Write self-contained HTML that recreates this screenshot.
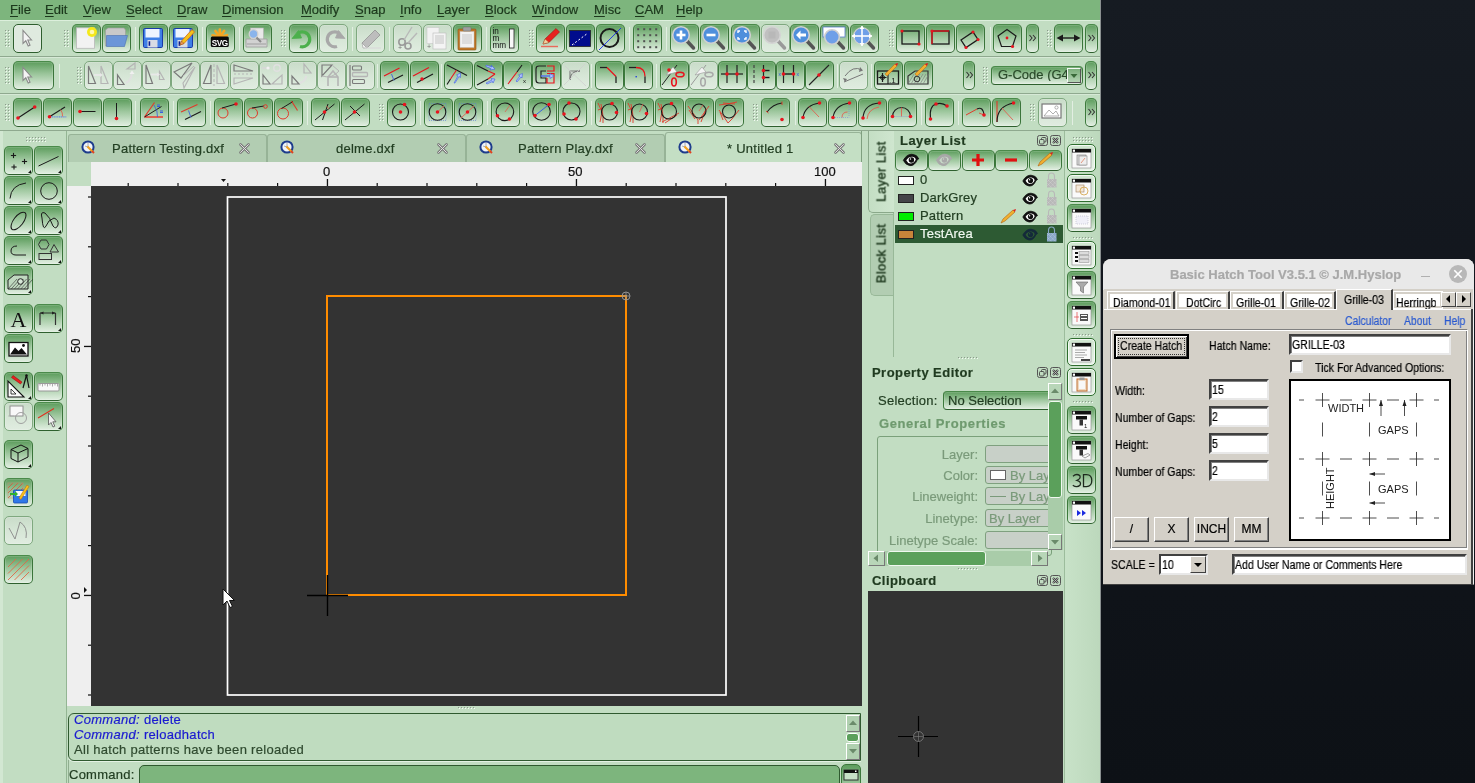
<!DOCTYPE html><html><head><meta charset="utf-8"><style>
*{margin:0;padding:0;box-sizing:border-box}
html,body{width:1475px;height:783px;overflow:hidden;background:#12161d;font-family:"Liberation Sans",sans-serif}
div,svg{position:absolute}
u{text-underline-offset:2px}
.t{white-space:nowrap;line-height:1;will-change:transform;-webkit-text-stroke:0.2px}
svg text{will-change:transform}
.b{border:1px solid #3c783c;border-color:#4a8a4a #3a743a #2e602e #3c7a3c;border-radius:5px;background:linear-gradient(#5d9d5d,#9cc69c 45%,#e2efe2);box-shadow:inset 0 0 0 1px rgba(255,255,255,.15)}
.b svg{position:absolute;left:-1px;top:-1px;overflow:hidden}
.b.d{border-color:#7fa87f;background:linear-gradient(#c9dcc9,#d6e6d6 50%,#e0ece0)}
.b.w2{border-color:#2e6e2e;background:linear-gradient(#cfe6cf,#e8f2e8);box-shadow:inset 0 0 0 1px #f4faf4}
.b.c{border-color:#2e5e2e;background:#dfeadf}
</style></head><body><div style="left:0px;top:0px;width:1100px;height:20px;background:#7db57d"></div>
<div class="t" style="left:10px;top:3px;font-size:13px;color:#1c381c"><u>F</u>ile</div>
<div class="t" style="left:45px;top:3px;font-size:13px;color:#1c381c"><u>E</u>dit</div>
<div class="t" style="left:83px;top:3px;font-size:13px;color:#1c381c"><u>V</u>iew</div>
<div class="t" style="left:126px;top:3px;font-size:13px;color:#1c381c"><u>S</u>elect</div>
<div class="t" style="left:177px;top:3px;font-size:13px;color:#1c381c"><u>D</u>raw</div>
<div class="t" style="left:222px;top:3px;font-size:13px;color:#1c381c"><u>D</u>imension</div>
<div class="t" style="left:301px;top:3px;font-size:13px;color:#1c381c"><u>M</u>odify</div>
<div class="t" style="left:355px;top:3px;font-size:13px;color:#1c381c"><u>S</u>nap</div>
<div class="t" style="left:400px;top:3px;font-size:13px;color:#1c381c"><u>I</u>nfo</div>
<div class="t" style="left:437px;top:3px;font-size:13px;color:#1c381c"><u>L</u>ayer</div>
<div class="t" style="left:485px;top:3px;font-size:13px;color:#1c381c"><u>B</u>lock</div>
<div class="t" style="left:532px;top:3px;font-size:13px;color:#1c381c"><u>W</u>indow</div>
<div class="t" style="left:594px;top:3px;font-size:13px;color:#1c381c"><u>M</u>isc</div>
<div class="t" style="left:635px;top:3px;font-size:13px;color:#1c381c"><u>C</u>AM</div>
<div class="t" style="left:676px;top:3px;font-size:13px;color:#1c381c"><u>H</u>elp</div>
<div style="left:0px;top:20px;width:1100px;height:110px;background:#c2ddc2"></div>
<div style="left:0px;top:20px;width:1100px;height:1px;background:#dcefdc"></div>
<div style="left:0px;top:56px;width:1100px;height:1px;background:#8fa98f"></div>
<div style="left:0px;top:57px;width:1100px;height:1px;background:#d6e9d6"></div>
<div style="left:0px;top:93px;width:1100px;height:1px;background:#8fa98f"></div>
<div style="left:0px;top:94px;width:1100px;height:1px;background:#d6e9d6"></div>
<div style="left:0px;top:130px;width:1100px;height:1px;background:#8fa98f"></div>
<div style="left:0px;top:131px;width:1100px;height:1px;background:#d6e9d6"></div>
<div style="left:1100px;top:0px;width:1px;height:783px;background:#9aa3a0"></div>
<div style="left:0px;top:131px;width:1100px;height:652px;background:#c2ddc2"></div>
<div style="left:66px;top:131px;width:1px;height:652px;background:#93b593"></div>
<div style="left:0px;top:131px;width:3px;height:652px;background:#d2e7d2"></div>
<div style="left:67px;top:131px;width:800px;height:31px;background:#c2ddc2"></div>
<div style="left:68px;top:134px;width:199px;height:28px;background:#b2cdb2;border:1px solid #97b397;border-bottom:none;border-radius:3px 3px 0 0"></div>
<svg style="position:absolute;left:81px;top:140px;" width="14" height="14" viewBox="0 0 14 14"><circle cx="7" cy="7" r="5.6" fill="#f0f4f8" stroke="#1e3c8c" stroke-width="2"/><path d="M4 6 L7 7 M7 3 L7 7" stroke="#999" stroke-width="0.8"/><path d="M6.5 6.5 L11.5 11.5" stroke="#f0a020" stroke-width="2.2"/><path d="M11 11 L13 13" stroke="#e04020" stroke-width="2"/></svg>
<div class="t" style="left:112px;top:142px;font-size:13px;color:#223e22;letter-spacing:0.25px">Pattern Testing.dxf</div>
<svg style="position:absolute;left:239px;top:143px;" width="11" height="11" viewBox="0 0 11 11"><path d="M1.5 1.5 L9.5 9.5 M9.5 1.5 L1.5 9.5" stroke="#7a7a7a" stroke-width="2.6" stroke-linecap="round"/><path d="M1.5 1.5 L9.5 9.5 M9.5 1.5 L1.5 9.5" stroke="#e0e0e0" stroke-width="1" stroke-linecap="round"/></svg>
<div style="left:267px;top:134px;width:199px;height:28px;background:#b2cdb2;border:1px solid #97b397;border-bottom:none;border-radius:3px 3px 0 0"></div>
<svg style="position:absolute;left:280px;top:140px;" width="14" height="14" viewBox="0 0 14 14"><circle cx="7" cy="7" r="5.6" fill="#f0f4f8" stroke="#1e3c8c" stroke-width="2"/><path d="M4 6 L7 7 M7 3 L7 7" stroke="#999" stroke-width="0.8"/><path d="M6.5 6.5 L11.5 11.5" stroke="#f0a020" stroke-width="2.2"/><path d="M11 11 L13 13" stroke="#e04020" stroke-width="2"/></svg>
<div class="t" style="left:336px;top:142px;font-size:13px;color:#223e22;letter-spacing:0.25px">delme.dxf</div>
<svg style="position:absolute;left:437px;top:143px;" width="11" height="11" viewBox="0 0 11 11"><path d="M1.5 1.5 L9.5 9.5 M9.5 1.5 L1.5 9.5" stroke="#7a7a7a" stroke-width="2.6" stroke-linecap="round"/><path d="M1.5 1.5 L9.5 9.5 M9.5 1.5 L1.5 9.5" stroke="#e0e0e0" stroke-width="1" stroke-linecap="round"/></svg>
<div style="left:466px;top:134px;width:199px;height:28px;background:#b2cdb2;border:1px solid #97b397;border-bottom:none;border-radius:3px 3px 0 0"></div>
<svg style="position:absolute;left:479px;top:140px;" width="14" height="14" viewBox="0 0 14 14"><circle cx="7" cy="7" r="5.6" fill="#f0f4f8" stroke="#1e3c8c" stroke-width="2"/><path d="M4 6 L7 7 M7 3 L7 7" stroke="#999" stroke-width="0.8"/><path d="M6.5 6.5 L11.5 11.5" stroke="#f0a020" stroke-width="2.2"/><path d="M11 11 L13 13" stroke="#e04020" stroke-width="2"/></svg>
<div class="t" style="left:518px;top:142px;font-size:13px;color:#223e22;letter-spacing:0.25px">Pattern Play.dxf</div>
<svg style="position:absolute;left:635px;top:143px;" width="11" height="11" viewBox="0 0 11 11"><path d="M1.5 1.5 L9.5 9.5 M9.5 1.5 L1.5 9.5" stroke="#7a7a7a" stroke-width="2.6" stroke-linecap="round"/><path d="M1.5 1.5 L9.5 9.5 M9.5 1.5 L1.5 9.5" stroke="#e0e0e0" stroke-width="1" stroke-linecap="round"/></svg>
<div style="left:665px;top:132px;width:197px;height:30px;background:#c4dfc4;border:1px solid #97b397;border-bottom:none;border-radius:3px 3px 0 0"></div>
<svg style="position:absolute;left:678px;top:140px;" width="14" height="14" viewBox="0 0 14 14"><circle cx="7" cy="7" r="5.6" fill="#f0f4f8" stroke="#1e3c8c" stroke-width="2"/><path d="M4 6 L7 7 M7 3 L7 7" stroke="#999" stroke-width="0.8"/><path d="M6.5 6.5 L11.5 11.5" stroke="#f0a020" stroke-width="2.2"/><path d="M11 11 L13 13" stroke="#e04020" stroke-width="2"/></svg>
<div class="t" style="left:727px;top:142px;font-size:13px;color:#223e22;letter-spacing:0.25px">* Untitled 1</div>
<svg style="position:absolute;left:834px;top:143px;" width="11" height="11" viewBox="0 0 11 11"><path d="M1.5 1.5 L9.5 9.5 M9.5 1.5 L1.5 9.5" stroke="#7a7a7a" stroke-width="2.6" stroke-linecap="round"/><path d="M1.5 1.5 L9.5 9.5 M9.5 1.5 L1.5 9.5" stroke="#e0e0e0" stroke-width="1" stroke-linecap="round"/></svg>
<div style="left:67px;top:162px;width:795px;height:24px;background:#efefef"></div>
<div style="left:67px;top:162px;width:24px;height:24px;background:#c2ddc2"></div>
<div style="left:67px;top:186px;width:24px;height:520px;background:#efefef"></div>
<svg style="position:absolute;left:67px;top:162px;" width="795" height="24" viewBox="0 0 795 24"><rect x="60.6" y="21" width="1.2" height="3" fill="#111"/><rect x="110.4" y="21" width="1.2" height="3" fill="#111"/><rect x="160.2" y="21" width="1.2" height="3" fill="#111"/><rect x="210.0" y="21" width="1.2" height="3" fill="#111"/><rect x="259.8" y="17" width="1.3" height="7" fill="#111"/><rect x="309.6" y="21" width="1.2" height="3" fill="#111"/><rect x="359.4" y="21" width="1.2" height="3" fill="#111"/><rect x="409.2" y="21" width="1.2" height="3" fill="#111"/><rect x="459.0" y="21" width="1.2" height="3" fill="#111"/><rect x="508.8" y="17" width="1.3" height="7" fill="#111"/><rect x="558.6" y="21" width="1.2" height="3" fill="#111"/><rect x="608.4" y="21" width="1.2" height="3" fill="#111"/><rect x="658.2" y="21" width="1.2" height="3" fill="#111"/><rect x="708.0" y="21" width="1.2" height="3" fill="#111"/><rect x="757.8" y="17" width="1.3" height="7" fill="#111"/><path d="M154 17 L159 17 L156.5 20 Z" fill="#111"/></svg>
<div class="t" style="left:323px;top:165px;font-size:13px;color:#111">0</div>
<div class="t" style="left:568px;top:165px;font-size:13px;color:#111">50</div>
<div class="t" style="left:814px;top:165px;font-size:13px;color:#111">100</div>
<svg style="position:absolute;left:67px;top:186px;" width="24" height="520" viewBox="0 0 24 520"><rect x="21" y="508.4" width="3" height="1.2" fill="#111"/><rect x="21" y="458.6" width="3" height="1.2" fill="#111"/><rect x="17" y="408.8" width="7" height="1.3" fill="#111"/><rect x="21" y="359.0" width="3" height="1.2" fill="#111"/><rect x="21" y="309.2" width="3" height="1.2" fill="#111"/><rect x="21" y="259.4" width="3" height="1.2" fill="#111"/><rect x="21" y="209.6" width="3" height="1.2" fill="#111"/><rect x="17" y="159.8" width="7" height="1.3" fill="#111"/><rect x="21" y="110.0" width="3" height="1.2" fill="#111"/><rect x="21" y="60.2" width="3" height="1.2" fill="#111"/><rect x="21" y="10.4" width="3" height="1.2" fill="#111"/><path d="M17 401 L17 407 L20 404 Z" fill="#111"/></svg>
<div class="t" style="left:69px;top:339px;font-size:13px;color:#111;transform:rotate(-90deg);transform-origin:7px 7px;width:14px">50</div>
<div class="t" style="left:69px;top:589px;font-size:13px;color:#111;transform:rotate(-90deg);transform-origin:7px 7px;width:14px;text-align:center">0</div>
<div style="left:91px;top:186px;width:771px;height:520px;background:#333333"></div>
<svg style="position:absolute;left:91px;top:186px;" width="771" height="520" viewBox="0 0 771 520"><rect x="136.5" y="11" width="498.5" height="498" fill="none" stroke="#ffffff" stroke-width="1.7"/><path d="M236 110 L535 110 L535 409 L236 409 Z" fill="none" stroke="#ff8c00" stroke-width="2"/><line x1="216" y1="409.5" x2="257" y2="409.5" stroke="#000" stroke-width="1.4"/><line x1="236.5" y1="389" x2="236.5" y2="430" stroke="#000" stroke-width="1.4"/><circle cx="535" cy="110" r="4" fill="none" stroke="#9a9a9a" stroke-width="0.9"/><path d="M531 110 L539 110 M535 106 L535 114" stroke="#9a9a9a" stroke-width="0.8"/><path d="M132 403 L132 419 L136 415 L139 421.5 L141.5 420.5 L138.5 414.5 L143.5 414.5 Z" fill="#fff" stroke="#111" stroke-width="1"/></svg>
<svg style="position:absolute;left:458px;top:707px;" width="19" height="4" viewBox="0 0 19 4"><rect x="1" y="1" width="1" height="1" fill="#f4faf4"/><rect x="0" y="0" width="1" height="1" fill="#8c9a8c"/><rect x="4" y="1" width="1" height="1" fill="#f4faf4"/><rect x="3" y="0" width="1" height="1" fill="#8c9a8c"/><rect x="7" y="1" width="1" height="1" fill="#f4faf4"/><rect x="6" y="0" width="1" height="1" fill="#8c9a8c"/><rect x="10" y="1" width="1" height="1" fill="#f4faf4"/><rect x="9" y="0" width="1" height="1" fill="#8c9a8c"/><rect x="13" y="1" width="1" height="1" fill="#f4faf4"/><rect x="12" y="0" width="1" height="1" fill="#8c9a8c"/><rect x="16" y="1" width="1" height="1" fill="#f4faf4"/><rect x="15" y="0" width="1" height="1" fill="#8c9a8c"/></svg>
<div style="left:68px;top:713px;width:793px;height:48px;background:#bfdcbf;border:1px solid #2f5a2f;border-radius:6px 0 0 6px;box-shadow:0 1px 0 #e4f2e4"></div>
<div class="t" style="left:74px;top:712px;font-size:13px;line-height:15px;letter-spacing:0.3px;color:#1a1ad0"><i>Command:</i> delete<br><i>Command:</i> reloadhatch<br><span style="color:#2f4a2f">All hatch patterns have been reloaded</span></div>
<div style="left:846px;top:715px;width:14px;height:17px;background:#b0d0b0;border:1px solid #fff;border-right-color:#777;border-bottom-color:#777"></div>
<svg style="position:absolute;left:846px;top:715px;" width="14" height="17" viewBox="0 0 14 17"><path d="M3 10 L11 10 L7 5.5 Z" fill="#6a8a6a"/></svg>
<div style="left:846px;top:733px;width:13px;height:9px;background:#5ba05b;border:1px solid #fff;border-radius:3px"></div>
<div style="left:846px;top:743px;width:14px;height:17px;background:#b0d0b0;border:1px solid #fff;border-right-color:#777;border-bottom-color:#777"></div>
<svg style="position:absolute;left:846px;top:743px;" width="14" height="17" viewBox="0 0 14 17"><path d="M3 6 L11 6 L7 10.5 Z" fill="#6a8a6a"/></svg>
<div style="left:68px;top:760px;width:1px;height:23px;background:#8fae8f"></div>
<div class="t" style="left:69px;top:768px;font-size:13px;color:#223e22;letter-spacing:0.25px">Command:</div>
<div style="left:139px;top:765px;width:701px;height:25px;background:#7db57d;border:1px solid #2f5a2f;border-radius:5px"></div>
<div style="left:841px;top:764px;width:20px;height:25px;border:1px solid #3c783c;border-radius:5px;background:linear-gradient(#5d9d5d,#a8cca8)"></div>
<svg style="position:absolute;left:843px;top:769px;" width="16" height="12" viewBox="0 0 16 12"><rect x="1" y="1" width="14" height="10" fill="#c8e0c8" stroke="#333" stroke-width="1"/><rect x="1" y="1" width="14" height="3" fill="#111"/><rect x="12" y="1.5" width="1.5" height="1.5" fill="#fff"/></svg>
<div style="left:862px;top:131px;width:202px;height:652px;background:#c2ddc2"></div>
<div style="left:1064px;top:131px;width:1px;height:652px;background:#9cbc9c"></div>
<svg style="position:absolute;left:5px;top:30px;" width="7" height="19" viewBox="0 0 7 19"><rect x="1" y="1" width="1" height="1" fill="#f4faf4"/><rect x="0" y="0" width="1" height="1" fill="#8c9a8c"/><rect x="4" y="1" width="1" height="1" fill="#f4faf4"/><rect x="3" y="0" width="1" height="1" fill="#8c9a8c"/><rect x="1" y="4" width="1" height="1" fill="#f4faf4"/><rect x="0" y="3" width="1" height="1" fill="#8c9a8c"/><rect x="4" y="4" width="1" height="1" fill="#f4faf4"/><rect x="3" y="3" width="1" height="1" fill="#8c9a8c"/><rect x="1" y="7" width="1" height="1" fill="#f4faf4"/><rect x="0" y="6" width="1" height="1" fill="#8c9a8c"/><rect x="4" y="7" width="1" height="1" fill="#f4faf4"/><rect x="3" y="6" width="1" height="1" fill="#8c9a8c"/><rect x="1" y="10" width="1" height="1" fill="#f4faf4"/><rect x="0" y="9" width="1" height="1" fill="#8c9a8c"/><rect x="4" y="10" width="1" height="1" fill="#f4faf4"/><rect x="3" y="9" width="1" height="1" fill="#8c9a8c"/><rect x="1" y="13" width="1" height="1" fill="#f4faf4"/><rect x="0" y="12" width="1" height="1" fill="#8c9a8c"/><rect x="4" y="13" width="1" height="1" fill="#f4faf4"/><rect x="3" y="12" width="1" height="1" fill="#8c9a8c"/><rect x="1" y="16" width="1" height="1" fill="#f4faf4"/><rect x="0" y="15" width="1" height="1" fill="#8c9a8c"/><rect x="4" y="16" width="1" height="1" fill="#f4faf4"/><rect x="3" y="15" width="1" height="1" fill="#8c9a8c"/></svg>
<div class="b c" style="left:13px;top:24px;width:29px;height:29px"><svg width="29" height="29" viewBox="0 0 29 29"><path d="M10 6.5 L10 19.5 L12.8 16.8 L15.2 22 L17 21.2 L14.8 16 L18.5 16 Z" fill="#f4f4f4" stroke="#8a8a8a" stroke-width="1.1" /></svg></div>
<svg style="position:absolute;left:64px;top:30px;" width="7" height="19" viewBox="0 0 7 19"><rect x="1" y="1" width="1" height="1" fill="#f4faf4"/><rect x="0" y="0" width="1" height="1" fill="#8c9a8c"/><rect x="4" y="1" width="1" height="1" fill="#f4faf4"/><rect x="3" y="0" width="1" height="1" fill="#8c9a8c"/><rect x="1" y="4" width="1" height="1" fill="#f4faf4"/><rect x="0" y="3" width="1" height="1" fill="#8c9a8c"/><rect x="4" y="4" width="1" height="1" fill="#f4faf4"/><rect x="3" y="3" width="1" height="1" fill="#8c9a8c"/><rect x="1" y="7" width="1" height="1" fill="#f4faf4"/><rect x="0" y="6" width="1" height="1" fill="#8c9a8c"/><rect x="4" y="7" width="1" height="1" fill="#f4faf4"/><rect x="3" y="6" width="1" height="1" fill="#8c9a8c"/><rect x="1" y="10" width="1" height="1" fill="#f4faf4"/><rect x="0" y="9" width="1" height="1" fill="#8c9a8c"/><rect x="4" y="10" width="1" height="1" fill="#f4faf4"/><rect x="3" y="9" width="1" height="1" fill="#8c9a8c"/><rect x="1" y="13" width="1" height="1" fill="#f4faf4"/><rect x="0" y="12" width="1" height="1" fill="#8c9a8c"/><rect x="4" y="13" width="1" height="1" fill="#f4faf4"/><rect x="3" y="12" width="1" height="1" fill="#8c9a8c"/><rect x="1" y="16" width="1" height="1" fill="#f4faf4"/><rect x="0" y="15" width="1" height="1" fill="#8c9a8c"/><rect x="4" y="16" width="1" height="1" fill="#f4faf4"/><rect x="3" y="15" width="1" height="1" fill="#8c9a8c"/></svg>
<div class="b g" style="left:72px;top:24px;width:29px;height:29px"><svg width="29" height="29" viewBox="0 0 29 29"><rect x="4.5" y="3.8" width="18" height="20.5" fill="#f2f2f2" stroke="#b9b9b9" stroke-width="0.8" rx="0" /><circle cx="20" cy="8" r="5" fill="#f4e81a"/><circle cx="20" cy="8" r="2.3" fill="#fff8b0"/></svg></div>
<div class="b g" style="left:102px;top:24px;width:29px;height:29px"><svg width="29" height="29" viewBox="0 0 29 29"><path d="M3.5 22 L3.5 6 L6 4 L22 4 L23.5 6 L23.5 15 Z" fill="#c9c9c9" stroke="#9a9a9a" stroke-width="0.6" /><path d="M4.5 11.5 L25.5 11.5 L22.5 22.5 L4.5 22.5 Z" fill="#6b96d8" stroke="#4a6fb0" stroke-width="0.6" /></svg></div>
<div style="left:135px;top:27px;width:1px;height:24px;background:#a9c8a9;border-right:1px solid #e2eee2"></div>
<div class="b g" style="left:139px;top:24px;width:29px;height:29px"><svg width="29" height="29" viewBox="0 0 29 29"><rect x="4.5" y="4.5" width="19" height="19" fill="#3f7fe6" stroke="#1a3aa8" stroke-width="1" rx="1.2" /><rect x="6.5" y="5" width="14" height="8.5" fill="#eef4ff" stroke="none" stroke-width="1" rx="0" /><rect x="8.5" y="16" width="10" height="7.5" fill="#d8dce4" stroke="none" stroke-width="1" rx="0" /><rect x="9.6" y="17.3" width="1.6" height="4.5" fill="#0a1a90" stroke="none" stroke-width="1" rx="0" /></svg></div>
<div class="b g" style="left:169px;top:24px;width:29px;height:29px"><svg width="29" height="29" viewBox="0 0 29 29"><rect x="4.5" y="4.5" width="19" height="19" fill="#3f7fe6" stroke="#1a3aa8" stroke-width="1" rx="1.2" /><rect x="6.5" y="5" width="14" height="8.5" fill="#eef4ff" stroke="none" stroke-width="1" rx="0" /><rect x="8.5" y="16" width="10" height="7.5" fill="#d8dce4" stroke="none" stroke-width="1" rx="0" /><rect x="9.6" y="17.3" width="1.6" height="4.5" fill="#0a1a90" stroke="none" stroke-width="1" rx="0" /><path d="M11 21 L12.5 17 L23 5.5 L25.5 8 L15 19.5 Z" fill="#f3c21a" stroke="#d86a10" stroke-width="0.8" /><path d="M11 21 L12.5 17 L15 19.5 Z" fill="#f0a060" stroke="#8a4a20" stroke-width="0.5" /></svg></div>
<div style="left:202px;top:27px;width:1px;height:24px;background:#a9c8a9;border-right:1px solid #e2eee2"></div>
<div class="b g" style="left:206px;top:24px;width:29px;height:29px"><svg width="29" height="29" viewBox="0 0 29 29"><line x1="13.8" y1="13" x2="21.066843162829837" y2="11.144470305591078" stroke="#f5a623" stroke-width="2.6" stroke-linecap="round"/><line x1="13.8" y1="13" x2="18.162623170979128" y2="6.899383714079697" stroke="#f5a623" stroke-width="2.6" stroke-linecap="round"/><line x1="13.8" y1="13" x2="13.8059724503305" y2="5.50000237801124" stroke="#f5a623" stroke-width="2.6" stroke-linecap="round"/><line x1="13.8" y1="13" x2="9.386241620584908" y2="6.936276971353074" stroke="#f5a623" stroke-width="2.6" stroke-linecap="round"/><line x1="13.8" y1="13" x2="6.517813761378072" y2="11.205630030895131" stroke="#f5a623" stroke-width="2.6" stroke-linecap="round"/><rect x="4.8" y="12.5" width="18" height="10.5" fill="#0a0a0a" stroke="none" stroke-width="1" rx="1.5" /><text x="13.8" y="21.5" font-family="Liberation Sans" font-size="8.2" font-weight="bold" fill="#ffffff" text-anchor="middle" letter-spacing="-0.4">SVG</text></svg></div>
<div style="left:239px;top:27px;width:1px;height:24px;background:#a9c8a9;border-right:1px solid #e2eee2"></div>
<div class="b g" style="left:243px;top:24px;width:29px;height:29px"><svg width="29" height="29" viewBox="0 0 29 29"><rect x="7.5" y="4" width="13" height="12" fill="#e8e8e8" stroke="#b0b0b0" stroke-width="0.6" rx="0" /><path d="M3 15 L24 15 L24 23 L3 23 Z" fill="#d2d2d2" stroke="#9c9c9c" stroke-width="0.8" /><rect x="4" y="19" width="19" height="2" fill="#b8b8b8" stroke="none" stroke-width="1" rx="0" /><circle cx="10.5" cy="10" r="4.3" fill="#8ab4ec" stroke="#d0d0d0" stroke-width="1.3"/><line x1="13.5" y1="13.5" x2="18" y2="18" stroke="#8a8a8a" stroke-width="2.2" /></svg></div>
<svg style="position:absolute;left:281px;top:30px;" width="7" height="19" viewBox="0 0 7 19"><rect x="1" y="1" width="1" height="1" fill="#f4faf4"/><rect x="0" y="0" width="1" height="1" fill="#8c9a8c"/><rect x="4" y="1" width="1" height="1" fill="#f4faf4"/><rect x="3" y="0" width="1" height="1" fill="#8c9a8c"/><rect x="1" y="4" width="1" height="1" fill="#f4faf4"/><rect x="0" y="3" width="1" height="1" fill="#8c9a8c"/><rect x="4" y="4" width="1" height="1" fill="#f4faf4"/><rect x="3" y="3" width="1" height="1" fill="#8c9a8c"/><rect x="1" y="7" width="1" height="1" fill="#f4faf4"/><rect x="0" y="6" width="1" height="1" fill="#8c9a8c"/><rect x="4" y="7" width="1" height="1" fill="#f4faf4"/><rect x="3" y="6" width="1" height="1" fill="#8c9a8c"/><rect x="1" y="10" width="1" height="1" fill="#f4faf4"/><rect x="0" y="9" width="1" height="1" fill="#8c9a8c"/><rect x="4" y="10" width="1" height="1" fill="#f4faf4"/><rect x="3" y="9" width="1" height="1" fill="#8c9a8c"/><rect x="1" y="13" width="1" height="1" fill="#f4faf4"/><rect x="0" y="12" width="1" height="1" fill="#8c9a8c"/><rect x="4" y="13" width="1" height="1" fill="#f4faf4"/><rect x="3" y="12" width="1" height="1" fill="#8c9a8c"/><rect x="1" y="16" width="1" height="1" fill="#f4faf4"/><rect x="0" y="15" width="1" height="1" fill="#8c9a8c"/><rect x="4" y="16" width="1" height="1" fill="#f4faf4"/><rect x="3" y="15" width="1" height="1" fill="#8c9a8c"/></svg>
<div class="b g" style="left:289px;top:24px;width:29px;height:29px"><svg width="29" height="29" viewBox="0 0 29 29"><path d="M8.5 9.5 A7.5 7.5 0 1 1 11 22.5" fill="none" stroke="#4cb04c" stroke-width="3.2" /><path d="M3 14.5 L9.5 6.5 L12.5 14 Z" fill="#4cb04c" stroke="#4cb04c" stroke-width="0.8" /></svg></div>
<div class="b d" style="left:319px;top:24px;width:29px;height:29px"><svg width="29" height="29" viewBox="0 0 29 29"><path d="M20.5 9.5 A7.5 7.5 0 1 0 18 22.5" fill="none" stroke="#a8a8a8" stroke-width="3.2" /><path d="M26 14.5 L19.5 6.5 L16.5 14 Z" fill="#a8a8a8" stroke="#a8a8a8" stroke-width="0.8" /></svg></div>
<div style="left:352px;top:27px;width:1px;height:24px;background:#a9c8a9;border-right:1px solid #e2eee2"></div>
<div class="b d" style="left:356px;top:24px;width:29px;height:29px"><svg width="29" height="29" viewBox="0 0 29 29"><path d="M6 19 L19 6 L24 11 L11 24 Z" fill="#bdbdbd" stroke="#8c8c8c" stroke-width="0.7" /><path d="M6 19 L11 24 L7 24 Z" fill="#f4f4f4" stroke="#9a9a9a" stroke-width="0.6" /><line x1="9" y1="24" x2="25" y2="24" stroke="#d8d8d8" stroke-width="1.2" /></svg></div>
<div style="left:389px;top:27px;width:1px;height:24px;background:#a9c8a9;border-right:1px solid #e2eee2"></div>
<div class="b d" style="left:393px;top:24px;width:29px;height:29px"><svg width="29" height="29" viewBox="0 0 29 29"><circle cx="9" cy="18" r="3.2" fill="none" stroke="#9a9a9a" stroke-width="1.6"/><circle cx="15" cy="22" r="3" fill="none" stroke="#9a9a9a" stroke-width="1.6"/><line x1="11" y1="16" x2="19" y2="3" stroke="#b8b8b8" stroke-width="1.4" /><line x1="15" y1="19" x2="24" y2="9" stroke="#b8b8b8" stroke-width="1.4" /><text x="5" y="26" font-family="Liberation Sans" font-size="7" font-weight="normal" fill="#777" text-anchor="start" >+</text></svg></div>
<div class="b d" style="left:423px;top:24px;width:29px;height:29px"><svg width="29" height="29" viewBox="0 0 29 29"><rect x="4" y="3.5" width="12" height="16" fill="#f2f2f2" stroke="#c8c8c8" stroke-width="0.6" rx="0" /><rect x="10" y="9" width="13" height="16" fill="#f4f4f4" stroke="#bbbbbb" stroke-width="0.6" rx="0" /><rect x="12" y="11" width="9" height="9" fill="#dcdcdc" stroke="none" stroke-width="1" rx="0" /><text x="4" y="25" font-family="Liberation Sans" font-size="7" font-weight="normal" fill="#777" text-anchor="start" >+</text></svg></div>
<div class="b g" style="left:453px;top:24px;width:29px;height:29px"><svg width="29" height="29" viewBox="0 0 29 29"><rect x="5" y="5" width="18" height="21" fill="#c0782a" stroke="#8a5010" stroke-width="0.6" rx="1" /><rect x="7" y="7.5" width="14" height="16" fill="#f2f2f2" stroke="#bbb" stroke-width="0.4" rx="0" /><rect x="10" y="3" width="8" height="4" fill="#a0a0a0" stroke="#707070" stroke-width="0.5" rx="1" /><rect x="9" y="10" width="10" height="10" fill="#dddddd" stroke="none" stroke-width="1" rx="0" /></svg></div>
<div style="left:486px;top:27px;width:1px;height:24px;background:#a9c8a9;border-right:1px solid #e2eee2"></div>
<div class="b g" style="left:490px;top:24px;width:29px;height:29px"><svg width="29" height="29" viewBox="0 0 29 29"><text x="2.5" y="10" font-family="Liberation Sans" font-size="8.2" font-weight="normal" fill="#111" text-anchor="start" >in</text><text x="2.5" y="17" font-family="Liberation Sans" font-size="8.2" font-weight="normal" fill="#111" text-anchor="start" >m</text><text x="2.5" y="24" font-family="Liberation Sans" font-size="8.2" font-weight="normal" fill="#111" text-anchor="start" >mm</text><rect x="19.5" y="5" width="4.5" height="19" fill="#f8f8f8" stroke="#222" stroke-width="0.8" rx="0" /></svg></div>
<svg style="position:absolute;left:529px;top:30px;" width="7" height="19" viewBox="0 0 7 19"><rect x="1" y="1" width="1" height="1" fill="#f4faf4"/><rect x="0" y="0" width="1" height="1" fill="#8c9a8c"/><rect x="4" y="1" width="1" height="1" fill="#f4faf4"/><rect x="3" y="0" width="1" height="1" fill="#8c9a8c"/><rect x="1" y="4" width="1" height="1" fill="#f4faf4"/><rect x="0" y="3" width="1" height="1" fill="#8c9a8c"/><rect x="4" y="4" width="1" height="1" fill="#f4faf4"/><rect x="3" y="3" width="1" height="1" fill="#8c9a8c"/><rect x="1" y="7" width="1" height="1" fill="#f4faf4"/><rect x="0" y="6" width="1" height="1" fill="#8c9a8c"/><rect x="4" y="7" width="1" height="1" fill="#f4faf4"/><rect x="3" y="6" width="1" height="1" fill="#8c9a8c"/><rect x="1" y="10" width="1" height="1" fill="#f4faf4"/><rect x="0" y="9" width="1" height="1" fill="#8c9a8c"/><rect x="4" y="10" width="1" height="1" fill="#f4faf4"/><rect x="3" y="9" width="1" height="1" fill="#8c9a8c"/><rect x="1" y="13" width="1" height="1" fill="#f4faf4"/><rect x="0" y="12" width="1" height="1" fill="#8c9a8c"/><rect x="4" y="13" width="1" height="1" fill="#f4faf4"/><rect x="3" y="12" width="1" height="1" fill="#8c9a8c"/><rect x="1" y="16" width="1" height="1" fill="#f4faf4"/><rect x="0" y="15" width="1" height="1" fill="#8c9a8c"/><rect x="4" y="16" width="1" height="1" fill="#f4faf4"/><rect x="3" y="15" width="1" height="1" fill="#8c9a8c"/></svg>
<div class="b g" style="left:536px;top:24px;width:29px;height:29px"><svg width="29" height="29" viewBox="0 0 29 29"><path d="M7 20 L9 15 L20 4.5 L23.5 8 L13 18.5 Z" fill="#e8231f" stroke="#a01010" stroke-width="0.6" /><path d="M7 20 L9 15 L13 18.5 Z" fill="#f0d0a0" stroke="#a06020" stroke-width="0.4" /><line x1="5" y1="22.5" x2="22" y2="22.5" stroke="#e86a5a" stroke-width="1.4" /></svg></div>
<div class="b g" style="left:566px;top:24px;width:29px;height:29px"><svg width="29" height="29" viewBox="0 0 29 29"><rect x="3.5" y="6.5" width="21" height="16" fill="#000c8c" stroke="#222" stroke-width="0.8" rx="0" /><path d="M6 21 L22 9" fill="none" stroke="#ffffff" stroke-width="1" stroke-dasharray="2 2"/><text x="6" y="21" font-family="Liberation Sans" font-size="5" font-weight="normal" fill="#fff" text-anchor="start" >..</text></svg></div>
<div class="b g" style="left:596px;top:24px;width:29px;height:29px"><svg width="29" height="29" viewBox="0 0 29 29"><circle cx="13.5" cy="14" r="9" fill="none" stroke="#1a1a1a" stroke-width="2"/><line x1="3" y1="26" x2="25" y2="4" stroke="#1a2ee8" stroke-width="0.9" /></svg></div>
<div style="left:629px;top:27px;width:1px;height:24px;background:#a9c8a9;border-right:1px solid #e2eee2"></div>
<div class="b g" style="left:633px;top:24px;width:29px;height:29px"><svg width="29" height="29" viewBox="0 0 29 29"><rect x="4.2" y="4.2" width="2" height="2" fill="#505050" stroke="none" stroke-width="1" rx="0" /><rect x="4.2" y="10.2" width="2" height="2" fill="#505050" stroke="none" stroke-width="1" rx="0" /><rect x="4.2" y="16.2" width="2" height="2" fill="#505050" stroke="none" stroke-width="1" rx="0" /><rect x="4.2" y="22.2" width="2" height="2" fill="#505050" stroke="none" stroke-width="1" rx="0" /><rect x="10.2" y="4.2" width="2" height="2" fill="#505050" stroke="none" stroke-width="1" rx="0" /><rect x="10.2" y="10.2" width="2" height="2" fill="#505050" stroke="none" stroke-width="1" rx="0" /><rect x="10.2" y="16.2" width="2" height="2" fill="#505050" stroke="none" stroke-width="1" rx="0" /><rect x="10.2" y="22.2" width="2" height="2" fill="#505050" stroke="none" stroke-width="1" rx="0" /><rect x="16.2" y="4.2" width="2" height="2" fill="#505050" stroke="none" stroke-width="1" rx="0" /><rect x="16.2" y="10.2" width="2" height="2" fill="#505050" stroke="none" stroke-width="1" rx="0" /><rect x="16.2" y="16.2" width="2" height="2" fill="#505050" stroke="none" stroke-width="1" rx="0" /><rect x="16.2" y="22.2" width="2" height="2" fill="#505050" stroke="none" stroke-width="1" rx="0" /><rect x="22.2" y="4.2" width="2" height="2" fill="#505050" stroke="none" stroke-width="1" rx="0" /><rect x="22.2" y="10.2" width="2" height="2" fill="#505050" stroke="none" stroke-width="1" rx="0" /><rect x="22.2" y="16.2" width="2" height="2" fill="#505050" stroke="none" stroke-width="1" rx="0" /><rect x="22.2" y="22.2" width="2" height="2" fill="#505050" stroke="none" stroke-width="1" rx="0" /></svg></div>
<div style="left:666px;top:27px;width:1px;height:24px;background:#a9c8a9;border-right:1px solid #e2eee2"></div>
<div class="b g" style="left:670px;top:24px;width:29px;height:29px"><svg width="29" height="29" viewBox="0 0 29 29"><line x1="17" y1="17" x2="23.5" y2="24" stroke="#555" stroke-width="3.5" stroke-linecap="round"/><circle cx="11" cy="11" r="8.3" fill="#4f8fdc" stroke="#d0d0d0" stroke-width="1.6"/><line x1="11" y1="6.5" x2="11" y2="15.5" stroke="#fff" stroke-width="2.6" /><line x1="6.5" y1="11" x2="15.5" y2="11" stroke="#fff" stroke-width="2.6" /></svg></div>
<div class="b g" style="left:700px;top:24px;width:29px;height:29px"><svg width="29" height="29" viewBox="0 0 29 29"><line x1="17" y1="17" x2="23.5" y2="24" stroke="#555" stroke-width="3.5" stroke-linecap="round"/><circle cx="11" cy="11" r="8.3" fill="#4f8fdc" stroke="#d0d0d0" stroke-width="1.6"/><line x1="6.5" y1="11" x2="15.5" y2="11" stroke="#fff" stroke-width="2.6" /></svg></div>
<div class="b g" style="left:731px;top:24px;width:29px;height:29px"><svg width="29" height="29" viewBox="0 0 29 29"><line x1="17" y1="17" x2="23.5" y2="24" stroke="#555" stroke-width="3.5" stroke-linecap="round"/><circle cx="11" cy="11" r="8.3" fill="#4f8fdc" stroke="#d0d0d0" stroke-width="1.6"/><path d="M7 9 L7 7 L9 7 M13 7 L15 7 L15 9 M15 13 L15 15 L13 15 M9 15 L7 15 L7 13" fill="none" stroke="#fff" stroke-width="1.4" /></svg></div>
<div class="b d" style="left:761px;top:24px;width:29px;height:29px"><svg width="29" height="29" viewBox="0 0 29 29"><line x1="17" y1="17" x2="23.5" y2="24" stroke="#9a9a9a" stroke-width="3.5" stroke-linecap="round"/><circle cx="11" cy="11" r="8.3" fill="#c0c0c0" stroke="#d4d4d4" stroke-width="1.6"/><rect x="7.5" y="7.5" width="7" height="7" fill="#b8b8b8" stroke="none" stroke-width="1" rx="0" /></svg></div>
<div class="b g" style="left:790px;top:24px;width:29px;height:29px"><svg width="29" height="29" viewBox="0 0 29 29"><line x1="17" y1="17" x2="23.5" y2="24" stroke="#555" stroke-width="3.5" stroke-linecap="round"/><circle cx="11" cy="11" r="8.3" fill="#4f8fdc" stroke="#d0d0d0" stroke-width="1.6"/><path d="M6 11 L10.5 6.5 L10.5 9.5 L16 9.5 L16 12.5 L10.5 12.5 L10.5 15.5 Z" fill="#fff" stroke="none" stroke-width="1.2" /></svg></div>
<div class="b g" style="left:820px;top:24px;width:29px;height:29px"><svg width="29" height="29" viewBox="0 0 29 29"><rect x="3" y="3" width="22" height="10" fill="#ffffff" stroke="#5a7ad0" stroke-width="0.8" rx="0" /><line x1="17" y1="17" x2="23.5" y2="24" stroke="#555" stroke-width="3.5" stroke-linecap="round"/><circle cx="12" cy="13" r="7.3" fill="#6f9fe8" stroke="#d0d0d0" stroke-width="1.6"/></svg></div>
<div class="b g" style="left:850px;top:24px;width:29px;height:29px"><svg width="29" height="29" viewBox="0 0 29 29"><line x1="17" y1="17" x2="23.5" y2="24" stroke="#555" stroke-width="3.5" stroke-linecap="round"/><circle cx="12" cy="12" r="8.3" fill="#6f9fe8" stroke="#d0d0d0" stroke-width="1.2"/><line x1="2" y1="12" x2="22" y2="12" stroke="#fff" stroke-width="1.6" /><line x1="12" y1="2" x2="12" y2="22" stroke="#fff" stroke-width="1.6" /><path d="M2 12 L5 9.5 L5 14.5 Z M22 12 L19 9.5 L19 14.5 Z M12 2 L9.5 5 L14.5 5 Z M12 22 L9.5 19 L14.5 19 Z" fill="#fff" stroke="none" stroke-width="1.2" /></svg></div>
<svg style="position:absolute;left:889px;top:30px;" width="7" height="19" viewBox="0 0 7 19"><rect x="1" y="1" width="1" height="1" fill="#f4faf4"/><rect x="0" y="0" width="1" height="1" fill="#8c9a8c"/><rect x="4" y="1" width="1" height="1" fill="#f4faf4"/><rect x="3" y="0" width="1" height="1" fill="#8c9a8c"/><rect x="1" y="4" width="1" height="1" fill="#f4faf4"/><rect x="0" y="3" width="1" height="1" fill="#8c9a8c"/><rect x="4" y="4" width="1" height="1" fill="#f4faf4"/><rect x="3" y="3" width="1" height="1" fill="#8c9a8c"/><rect x="1" y="7" width="1" height="1" fill="#f4faf4"/><rect x="0" y="6" width="1" height="1" fill="#8c9a8c"/><rect x="4" y="7" width="1" height="1" fill="#f4faf4"/><rect x="3" y="6" width="1" height="1" fill="#8c9a8c"/><rect x="1" y="10" width="1" height="1" fill="#f4faf4"/><rect x="0" y="9" width="1" height="1" fill="#8c9a8c"/><rect x="4" y="10" width="1" height="1" fill="#f4faf4"/><rect x="3" y="9" width="1" height="1" fill="#8c9a8c"/><rect x="1" y="13" width="1" height="1" fill="#f4faf4"/><rect x="0" y="12" width="1" height="1" fill="#8c9a8c"/><rect x="4" y="13" width="1" height="1" fill="#f4faf4"/><rect x="3" y="12" width="1" height="1" fill="#8c9a8c"/><rect x="1" y="16" width="1" height="1" fill="#f4faf4"/><rect x="0" y="15" width="1" height="1" fill="#8c9a8c"/><rect x="4" y="16" width="1" height="1" fill="#f4faf4"/><rect x="3" y="15" width="1" height="1" fill="#8c9a8c"/></svg>
<div class="b g" style="left:896px;top:24px;width:29px;height:29px"><svg width="29" height="29" viewBox="0 0 29 29"><rect x="6" y="7" width="17" height="13" fill="none" stroke="#1a1a1a" stroke-width="1.3" rx="0" /><circle cx="6" cy="7" r="1.6" fill="#e8141e"/><circle cx="23" cy="20" r="1.6" fill="#e8141e"/></svg></div>
<div class="b g" style="left:926px;top:24px;width:29px;height:29px"><svg width="29" height="29" viewBox="0 0 29 29"><rect x="6" y="7" width="17" height="13" fill="none" stroke="#1a1a1a" stroke-width="1.3" rx="0" /><line x1="6" y1="7" x2="23" y2="7" stroke="#e8141e" stroke-width="1.3" /><line x1="6" y1="7" x2="6" y2="20" stroke="#e8141e" stroke-width="1.3" /><circle cx="6" cy="7" r="1.6" fill="#e8141e"/></svg></div>
<div class="b g" style="left:956px;top:24px;width:29px;height:29px"><svg width="29" height="29" viewBox="0 0 29 29"><path d="M5 16 L17 8 L22 15.5 L10 23.5 Z" fill="none" stroke="#1a1a1a" stroke-width="1.3" /><circle cx="17" cy="8" r="1.6" fill="#e8141e"/><circle cx="10" cy="23.5" r="1.6" fill="#e8141e"/><circle cx="22" cy="15.5" r="1.6" fill="#e8141e"/></svg></div>
<div style="left:990px;top:27px;width:1px;height:24px;background:#a9c8a9;border-right:1px solid #e2eee2"></div>
<div class="b g" style="left:993px;top:24px;width:29px;height:29px"><svg width="29" height="29" viewBox="0 0 29 29"><path d="M14 5.5 L23 12 L19.5 22.5 L8.5 22.5 L5 12 Z" fill="none" stroke="#1a1a1a" stroke-width="1.2" /><circle cx="14" cy="14" r="1.4" fill="#e8141e"/><circle cx="19.5" cy="22.5" r="1.6" fill="#e8141e"/></svg></div>
<div class="b g" style="left:1026px;top:24px;width:13px;height:29px"><svg width="13" height="29" viewBox="0 0 13 29"><path d="M3.5 11 L6 14 L3.5 17 M7 11 L9.5 14 L7 17" fill="none" stroke="#333" stroke-width="1.1" /></svg></div>
<svg style="position:absolute;left:1047px;top:30px;" width="7" height="19" viewBox="0 0 7 19"><rect x="1" y="1" width="1" height="1" fill="#f4faf4"/><rect x="0" y="0" width="1" height="1" fill="#8c9a8c"/><rect x="4" y="1" width="1" height="1" fill="#f4faf4"/><rect x="3" y="0" width="1" height="1" fill="#8c9a8c"/><rect x="1" y="4" width="1" height="1" fill="#f4faf4"/><rect x="0" y="3" width="1" height="1" fill="#8c9a8c"/><rect x="4" y="4" width="1" height="1" fill="#f4faf4"/><rect x="3" y="3" width="1" height="1" fill="#8c9a8c"/><rect x="1" y="7" width="1" height="1" fill="#f4faf4"/><rect x="0" y="6" width="1" height="1" fill="#8c9a8c"/><rect x="4" y="7" width="1" height="1" fill="#f4faf4"/><rect x="3" y="6" width="1" height="1" fill="#8c9a8c"/><rect x="1" y="10" width="1" height="1" fill="#f4faf4"/><rect x="0" y="9" width="1" height="1" fill="#8c9a8c"/><rect x="4" y="10" width="1" height="1" fill="#f4faf4"/><rect x="3" y="9" width="1" height="1" fill="#8c9a8c"/><rect x="1" y="13" width="1" height="1" fill="#f4faf4"/><rect x="0" y="12" width="1" height="1" fill="#8c9a8c"/><rect x="4" y="13" width="1" height="1" fill="#f4faf4"/><rect x="3" y="12" width="1" height="1" fill="#8c9a8c"/><rect x="1" y="16" width="1" height="1" fill="#f4faf4"/><rect x="0" y="15" width="1" height="1" fill="#8c9a8c"/><rect x="4" y="16" width="1" height="1" fill="#f4faf4"/><rect x="3" y="15" width="1" height="1" fill="#8c9a8c"/></svg>
<div class="b g" style="left:1054px;top:24px;width:29px;height:29px"><svg width="29" height="29" viewBox="0 0 29 29"><line x1="6" y1="14" x2="22" y2="14" stroke="#1a1a1a" stroke-width="1.4" /><path d="M2.5 14 L9 10.5 L9 17.5 Z M26.5 14 L20 10.5 L20 17.5 Z" fill="#1a1a1a" stroke="none" stroke-width="1.2" /></svg></div>
<div class="b g" style="left:1085px;top:24px;width:13px;height:29px"><svg width="13" height="29" viewBox="0 0 13 29"><path d="M3.5 11 L6 14 L3.5 17 M7 11 L9.5 14 L7 17" fill="none" stroke="#333" stroke-width="1.1" /></svg></div>
<svg style="position:absolute;left:5px;top:67px;" width="7" height="19" viewBox="0 0 7 19"><rect x="1" y="1" width="1" height="1" fill="#f4faf4"/><rect x="0" y="0" width="1" height="1" fill="#8c9a8c"/><rect x="4" y="1" width="1" height="1" fill="#f4faf4"/><rect x="3" y="0" width="1" height="1" fill="#8c9a8c"/><rect x="1" y="4" width="1" height="1" fill="#f4faf4"/><rect x="0" y="3" width="1" height="1" fill="#8c9a8c"/><rect x="4" y="4" width="1" height="1" fill="#f4faf4"/><rect x="3" y="3" width="1" height="1" fill="#8c9a8c"/><rect x="1" y="7" width="1" height="1" fill="#f4faf4"/><rect x="0" y="6" width="1" height="1" fill="#8c9a8c"/><rect x="4" y="7" width="1" height="1" fill="#f4faf4"/><rect x="3" y="6" width="1" height="1" fill="#8c9a8c"/><rect x="1" y="10" width="1" height="1" fill="#f4faf4"/><rect x="0" y="9" width="1" height="1" fill="#8c9a8c"/><rect x="4" y="10" width="1" height="1" fill="#f4faf4"/><rect x="3" y="9" width="1" height="1" fill="#8c9a8c"/><rect x="1" y="13" width="1" height="1" fill="#f4faf4"/><rect x="0" y="12" width="1" height="1" fill="#8c9a8c"/><rect x="4" y="13" width="1" height="1" fill="#f4faf4"/><rect x="3" y="12" width="1" height="1" fill="#8c9a8c"/><rect x="1" y="16" width="1" height="1" fill="#f4faf4"/><rect x="0" y="15" width="1" height="1" fill="#8c9a8c"/><rect x="4" y="16" width="1" height="1" fill="#f4faf4"/><rect x="3" y="15" width="1" height="1" fill="#8c9a8c"/></svg>
<div class="b g" style="left:13px;top:61px;width:41px;height:29px"><svg width="41" height="29" viewBox="0 0 41 29"><path d="M10 6.5 L10 19.5 L12.8 16.8 L15.2 22 L17 21.2 L14.8 16 L18.5 16 Z" fill="#f4f4f4" stroke="#8a8a8a" stroke-width="1.1" /></svg></div>
<div style="left:59px;top:64px;width:1px;height:24px;background:#a9c8a9;border-right:1px solid #e2eee2"></div>
<svg style="position:absolute;left:77px;top:67px;" width="7" height="19" viewBox="0 0 7 19"><rect x="1" y="1" width="1" height="1" fill="#f4faf4"/><rect x="0" y="0" width="1" height="1" fill="#8c9a8c"/><rect x="4" y="1" width="1" height="1" fill="#f4faf4"/><rect x="3" y="0" width="1" height="1" fill="#8c9a8c"/><rect x="1" y="4" width="1" height="1" fill="#f4faf4"/><rect x="0" y="3" width="1" height="1" fill="#8c9a8c"/><rect x="4" y="4" width="1" height="1" fill="#f4faf4"/><rect x="3" y="3" width="1" height="1" fill="#8c9a8c"/><rect x="1" y="7" width="1" height="1" fill="#f4faf4"/><rect x="0" y="6" width="1" height="1" fill="#8c9a8c"/><rect x="4" y="7" width="1" height="1" fill="#f4faf4"/><rect x="3" y="6" width="1" height="1" fill="#8c9a8c"/><rect x="1" y="10" width="1" height="1" fill="#f4faf4"/><rect x="0" y="9" width="1" height="1" fill="#8c9a8c"/><rect x="4" y="10" width="1" height="1" fill="#f4faf4"/><rect x="3" y="9" width="1" height="1" fill="#8c9a8c"/><rect x="1" y="13" width="1" height="1" fill="#f4faf4"/><rect x="0" y="12" width="1" height="1" fill="#8c9a8c"/><rect x="4" y="13" width="1" height="1" fill="#f4faf4"/><rect x="3" y="12" width="1" height="1" fill="#8c9a8c"/><rect x="1" y="16" width="1" height="1" fill="#f4faf4"/><rect x="0" y="15" width="1" height="1" fill="#8c9a8c"/><rect x="4" y="16" width="1" height="1" fill="#f4faf4"/><rect x="3" y="15" width="1" height="1" fill="#8c9a8c"/></svg>
<div class="b d" style="left:84px;top:61px;width:29px;height:29px"><svg width="29" height="29" viewBox="0 0 29 29"><path d="M4.5 5 L4.5 22.5 L11.5 22.5 Z" fill="none" stroke="#7a7a7a" stroke-width="1.2" /><path d="M17 5 L17 22.5 L24 22.5 Z" fill="none" stroke="#b5b5b5" stroke-width="1.2" /><line x1="10" y1="14" x2="17" y2="14" stroke="#e8e8e8" stroke-width="1.8" /><path d="M19 14 L16 12 L16 16 Z" fill="#e8e8e8" stroke="none" stroke-width="1.2" /></svg></div>
<div class="b d" style="left:113px;top:61px;width:29px;height:29px"><svg width="29" height="29" viewBox="0 0 29 29"><path d="M4.5 14 L4.5 23.5 L11 23.5 Z" fill="none" stroke="#7a7a7a" stroke-width="1.2" /><path d="M14 8 L22 2 L22 8 Z" fill="none" stroke="#b5b5b5" stroke-width="1.2" /><path d="M13 22 Q18 20 19 12" fill="none" stroke="#e0e0e0" stroke-width="2" /><path d="M19 9.5 L16.5 13 L21.5 13 Z" fill="#f0f0f0" stroke="none" stroke-width="1.2" /></svg></div>
<div class="b d" style="left:142px;top:61px;width:29px;height:29px"><svg width="29" height="29" viewBox="0 0 29 29"><path d="M4 4 L4 22.5 L10.5 22.5 Z" fill="none" stroke="#7a7a7a" stroke-width="1.2" /><path d="M17.5 10.5 L17.5 18.5 L22 18.5 Z" fill="none" stroke="#b5b5b5" stroke-width="1.2" /><line x1="9" y1="13.5" x2="17" y2="13.5" stroke="#e8e8e8" stroke-width="1.8" /><path d="M18 13.5 L15 11.5 L15 15.5 Z" fill="#e8e8e8" stroke="none" stroke-width="1.2" /></svg></div>
<div class="b d" style="left:171px;top:61px;width:29px;height:29px"><svg width="29" height="29" viewBox="0 0 29 29"><path d="M3 11 L21 2 L10 17 Z" fill="none" stroke="#7a7a7a" stroke-width="1.2" /><line x1="12" y1="15" x2="23" y2="5" stroke="#b5b5b5" stroke-width="1" /><path d="M12 22 L24 6 L13 27 Z" fill="none" stroke="#b5b5b5" stroke-width="1.2" /></svg></div>
<div class="b d" style="left:200px;top:61px;width:29px;height:29px"><svg width="29" height="29" viewBox="0 0 29 29"><path d="M3.5 22.5 L11 4 L11 22.5 Z" fill="none" stroke="#7a7a7a" stroke-width="1.2" /><line x1="14" y1="3" x2="14" y2="25" stroke="#b5b5b5" stroke-width="1" stroke-dasharray="3 2"/><path d="M17 4 L17 22.5 L24.5 22.5 Z" fill="none" stroke="#b5b5b5" stroke-width="1.2" /></svg></div>
<div class="b d" style="left:230px;top:61px;width:29px;height:29px"><svg width="29" height="29" viewBox="0 0 29 29"><path d="M4 4 L4 10 L23 10 Z" fill="none" stroke="#7a7a7a" stroke-width="1.2" /><line x1="4" y1="13" x2="23" y2="13" stroke="#b5b5b5" stroke-width="1" stroke-dasharray="2 2"/><path d="M4 17 L4 23 L23 17 Z" fill="none" stroke="#b5b5b5" stroke-width="1.2" /></svg></div>
<div class="b d" style="left:259px;top:61px;width:29px;height:29px"><svg width="29" height="29" viewBox="0 0 29 29"><path d="M3 7 L11 7" fill="none" stroke="#d8d8d8" stroke-width="1.6" /><circle cx="9" cy="7" r="1.6" fill="#f0f0f0" stroke="none" stroke-width="0"/><circle cx="18" cy="7" r="3.2" fill="none" stroke="#e0e0e0" stroke-width="1.4"/><path d="M4 14 L4 23 L11 23 Z" fill="none" stroke="#7a7a7a" stroke-width="1.2" /><path d="M13 23 L23 14 L23 23 Z" fill="none" stroke="#b5b5b5" stroke-width="1.2" /></svg></div>
<div class="b d" style="left:288px;top:61px;width:29px;height:29px"><svg width="29" height="29" viewBox="0 0 29 29"><path d="M4 15 L4 23 L11 23 Z" fill="none" stroke="#7a7a7a" stroke-width="1.2" /><path d="M16 3 L16 12 L23 12 Z" fill="none" stroke="#b5b5b5" stroke-width="1.2" /><path d="M12 22 Q18 20 18 15" fill="none" stroke="#e0e0e0" stroke-width="2" /></svg></div>
<div class="b d" style="left:317px;top:61px;width:29px;height:29px"><svg width="29" height="29" viewBox="0 0 29 29"><path d="M5 4 L15 4 L5 15 Z" fill="none" stroke="#7a7a7a" stroke-width="1.2" /><path d="M5 15 Q15 18 22 10 L15 4" fill="none" stroke="#b5b5b5" stroke-width="1" /><path d="M11 25 L11 16 L16 10 L21 16 L21 25" fill="none" stroke="#b5b5b5" stroke-width="1.6" /><line x1="11" y1="16" x2="21" y2="16" stroke="#b5b5b5" stroke-width="1.6" /></svg></div>
<div class="b d" style="left:346px;top:61px;width:29px;height:29px"><svg width="29" height="29" viewBox="0 0 29 29"><line x1="4" y1="4" x2="4" y2="25" stroke="#7a7a7a" stroke-width="1.2" /><rect x="6.5" y="5" width="9" height="4" fill="none" stroke="#7a7a7a" stroke-width="1.1" rx="1" /><rect x="6.5" y="11.5" width="15" height="4" fill="none" stroke="#b5b5b5" stroke-width="1.3" rx="1" /><rect x="6.5" y="18.5" width="12" height="4" fill="none" stroke="#7a7a7a" stroke-width="1.1" rx="1" /></svg></div>
<div style="left:377px;top:64px;width:1px;height:24px;background:#a9c8a9;border-right:1px solid #e2eee2"></div>
<div class="b g" style="left:380px;top:61px;width:29px;height:29px"><svg width="29" height="29" viewBox="0 0 29 29"><line x1="4" y1="15" x2="19.5" y2="7" stroke="#e8141e" stroke-width="1.2" /><line x1="8" y1="21.5" x2="23" y2="14" stroke="#1a1a1a" stroke-width="1.2" /><line x1="11.5" y1="13" x2="14" y2="19.5" stroke="#4a6ad8" stroke-width="1" /></svg></div>
<div class="b g" style="left:410px;top:61px;width:29px;height:29px"><svg width="29" height="29" viewBox="0 0 29 29"><line x1="3" y1="15" x2="19" y2="6.5" stroke="#e8141e" stroke-width="1.2" /><line x1="7" y1="21.5" x2="23" y2="13" stroke="#1a1a1a" stroke-width="1.2" /><circle cx="12" cy="18" r="1.7" fill="#e8141e"/></svg></div>
<div style="left:441px;top:64px;width:1px;height:24px;background:#a9c8a9;border-right:1px solid #e2eee2"></div>
<div class="b g" style="left:444px;top:61px;width:29px;height:29px"><svg width="29" height="29" viewBox="0 0 29 29"><line x1="3" y1="4" x2="23" y2="14.5" stroke="#1a1a1a" stroke-width="1.1" /><line x1="3" y1="23.5" x2="6.5" y2="18" stroke="#1a1a1a" stroke-width="1.1" /><line x1="6.5" y1="18" x2="12.5" y2="9" stroke="#e8141e" stroke-width="1.1" /><path d="M10 22 L14 15 L12.5 14 L16.5 12 L16.5 16.5 L15 15.5 L11 22 Z" fill="#b0c0ff" stroke="#4060e0" stroke-width="0.6" /></svg></div>
<div class="b g" style="left:474px;top:61px;width:29px;height:29px"><svg width="29" height="29" viewBox="0 0 29 29"><line x1="3" y1="4.5" x2="14" y2="10" stroke="#1a1a1a" stroke-width="1.1" /><line x1="14" y1="10" x2="21" y2="13" stroke="#e8141e" stroke-width="1.1" /><line x1="21" y1="13" x2="14" y2="18" stroke="#e8141e" stroke-width="1.1" /><line x1="14" y1="18" x2="3" y2="24" stroke="#1a1a1a" stroke-width="1.1" /><path d="M12 4 L18 6 L17 4 L21 8 L16 9 L17 7.5 L12 5.5 Z" fill="#b0c0ff" stroke="#4060e0" stroke-width="0.6" /><path d="M12 22 L18 19 L17 17.5 L21 18 L19 22 L18.5 20.5 L13 23 Z" fill="#b0c0ff" stroke="#4060e0" stroke-width="0.6" /></svg></div>
<div class="b g" style="left:503px;top:61px;width:29px;height:29px"><svg width="29" height="29" viewBox="0 0 29 29"><line x1="5" y1="23" x2="14" y2="11" stroke="#e8141e" stroke-width="1.1" /><line x1="14" y1="11" x2="19" y2="4" stroke="#1a1a1a" stroke-width="1.1" /><path d="M13 20 L17 15 L15.5 14 L19.5 12.5 L19 17 L18 16 L14 21 Z" fill="#b0c0ff" stroke="#4060e0" stroke-width="0.6" /><text x="20" y="22" font-family="Liberation Sans" font-size="6" font-weight="normal" fill="#1a1a1a" text-anchor="start" >x</text></svg></div>
<div class="b g" style="left:532px;top:61px;width:29px;height:29px"><svg width="29" height="29" viewBox="0 0 29 29"><path d="M14 5 L7 5 Q4 5 4 8 L4 19 Q4 22 7 22 L14 22 L14 17 L9 17 L9 10 L14 10" fill="none" stroke="#222" stroke-width="1.2" /><path d="M15 5 L22 5 L22 10 L15 10 M15 12.5 L22 12.5 L22 22 L15 22 L15 17" fill="none" stroke="#e8141e" stroke-width="1.2" /><path d="M9 14.5 L18 14.5 L18 12.5 L22 15 L18 17.5 L18 15.5 L9 15.5 Z" fill="#b0c0ff" stroke="#4060e0" stroke-width="0.6" /></svg></div>
<div class="b d" style="left:561px;top:61px;width:29px;height:29px"><svg width="29" height="29" viewBox="0 0 29 29"><path d="M9 19 L9 10 L19 10" fill="none" stroke="#7a7a7a" stroke-width="1.1" /><path d="M9 19 Q9 10 19 10" fill="none" stroke="#7a7a7a" stroke-width="1.1" /><line x1="4" y1="5" x2="25" y2="25" stroke="#cfcfcf" stroke-width="0.8" /><line x1="3" y1="24" x2="24" y2="3" stroke="#cfcfcf" stroke-width="0.8" /></svg></div>
<div style="left:591px;top:64px;width:1px;height:24px;background:#a9c8a9;border-right:1px solid #e2eee2"></div>
<div class="b g" style="left:595px;top:61px;width:29px;height:29px"><svg width="29" height="29" viewBox="0 0 29 29"><line x1="5" y1="6.5" x2="12" y2="6.5" stroke="#222" stroke-width="1.3" /><line x1="12" y1="6.5" x2="21" y2="15.5" stroke="#e8141e" stroke-width="1.3" /><line x1="21" y1="15.5" x2="21" y2="22" stroke="#222" stroke-width="1.3" /></svg></div>
<div class="b g" style="left:624px;top:61px;width:29px;height:29px"><svg width="29" height="29" viewBox="0 0 29 29"><line x1="5" y1="6.5" x2="12" y2="6.5" stroke="#222" stroke-width="1.3" /><path d="M12 6.5 Q21 6.5 21 15.5" fill="none" stroke="#e8141e" stroke-width="1.3" /><line x1="21" y1="15.5" x2="21" y2="22" stroke="#222" stroke-width="1.3" /><rect x="11.5" y="15" width="1.4" height="1.4" fill="#2040e0" stroke="none" stroke-width="1" rx="0" /></svg></div>
<div style="left:656px;top:64px;width:1px;height:24px;background:#a9c8a9;border-right:1px solid #e2eee2"></div>
<div class="b g" style="left:660px;top:61px;width:29px;height:29px"><svg width="29" height="29" viewBox="0 0 29 29"><line x1="2" y1="24" x2="17" y2="4" stroke="#222" stroke-width="1" /><path d="M6 14 L17 11 L13 6 Z" fill="#f4f4f4" stroke="#999" stroke-width="0.6" /><ellipse cx="20" cy="13.5" rx="4" ry="2.3" fill="none" stroke="#e8141e" stroke-width="1.6"/><ellipse cx="14" cy="21" rx="2.3" ry="4" fill="none" stroke="#e8141e" stroke-width="1.6"/><circle cx="9" cy="9" r="1.8" fill="#e8141e"/></svg></div>
<div class="b d" style="left:689px;top:61px;width:29px;height:29px"><svg width="29" height="29" viewBox="0 0 29 29"><line x1="2" y1="24" x2="17" y2="4" stroke="#999" stroke-width="1" /><path d="M6 14 L17 11 L13 6 Z" fill="#f4f4f4" stroke="#999" stroke-width="0.6" /><ellipse cx="20" cy="13.5" rx="4" ry="2.3" fill="none" stroke="#a8a8a8" stroke-width="1.6"/><ellipse cx="14" cy="21" rx="2.3" ry="4" fill="none" stroke="#a8a8a8" stroke-width="1.6"/></svg></div>
<div class="b g" style="left:718px;top:61px;width:29px;height:29px"><svg width="29" height="29" viewBox="0 0 29 29"><line x1="9" y1="4" x2="9" y2="22" stroke="#222" stroke-width="1.2" /><line x1="19" y1="4" x2="19" y2="22" stroke="#222" stroke-width="1.2" /><line x1="3" y1="13" x2="25" y2="13" stroke="#1a1a1a" stroke-width="1.2" /><circle cx="9" cy="13" r="1.8" fill="#e8141e"/><circle cx="19" cy="13" r="1.8" fill="#e8141e"/></svg></div>
<div class="b g" style="left:747px;top:61px;width:29px;height:29px"><svg width="29" height="29" viewBox="0 0 29 29"><line x1="7" y1="4" x2="7" y2="22" stroke="#444" stroke-width="1.2" stroke-dasharray="3 2"/><line x1="16.5" y1="4" x2="16.5" y2="22" stroke="#222" stroke-width="1.2" /><line x1="16.5" y1="9.5" x2="22.5" y2="9.5" stroke="#1a1a1a" stroke-width="1.4" /><line x1="16.5" y1="16.5" x2="22.5" y2="16.5" stroke="#1a1a1a" stroke-width="1.4" /><circle cx="16.5" cy="9.5" r="1.8" fill="#e8141e"/><circle cx="16.5" cy="16.5" r="1.8" fill="#e8141e"/></svg></div>
<div class="b g" style="left:776px;top:61px;width:29px;height:29px"><svg width="29" height="29" viewBox="0 0 29 29"><line x1="7.5" y1="4" x2="7.5" y2="22" stroke="#222" stroke-width="1.2" /><line x1="17.5" y1="4" x2="17.5" y2="22" stroke="#222" stroke-width="1.2" /><line x1="7.5" y1="13" x2="17.5" y2="13" stroke="#1a1a1a" stroke-width="1.4" /><circle cx="7.5" cy="13" r="1.8" fill="#e8141e"/><circle cx="17.5" cy="13" r="1.8" fill="#e8141e"/><text x="2.5" y="15" font-family="Liberation Sans" font-size="5" font-weight="normal" fill="#3050e0" text-anchor="start" >x</text><text x="20.5" y="15" font-family="Liberation Sans" font-size="5" font-weight="normal" fill="#3050e0" text-anchor="start" >x</text></svg></div>
<div class="b g" style="left:805px;top:61px;width:29px;height:29px"><svg width="29" height="29" viewBox="0 0 29 29"><line x1="4" y1="24" x2="24" y2="4" stroke="#222" stroke-width="1.1" /><circle cx="14" cy="14" r="1.8" fill="#e8141e"/></svg></div>
<div style="left:837px;top:64px;width:1px;height:24px;background:#a9c8a9;border-right:1px solid #e2eee2"></div>
<div class="b d" style="left:839px;top:61px;width:29px;height:29px"><svg width="29" height="29" viewBox="0 0 29 29"><path d="M6 15 Q14 4 23 9" fill="none" stroke="#777" stroke-width="1" /><path d="M21 6 L24 9.5 L20 11 Z" fill="#777" stroke="none" stroke-width="1.2" /><line x1="5" y1="21" x2="24" y2="13" stroke="#777" stroke-width="1" /><path d="M4 17 L6 21 L8 18 Z" fill="#777" stroke="none" stroke-width="1.2" /></svg></div>
<div style="left:871px;top:64px;width:1px;height:24px;background:#a9c8a9;border-right:1px solid #e2eee2"></div>
<div class="b g" style="left:874px;top:61px;width:29px;height:29px"><svg width="29" height="29" viewBox="0 0 29 29"><rect x="3.5" y="10" width="21" height="13" fill="none" stroke="#1a1a1a" stroke-width="1.3" rx="0" /><line x1="14" y1="10" x2="14" y2="23" stroke="#1a1a1a" stroke-width="1.1" /><path d="M8.5 12 L8.5 21 M4.5 16.5 L12.5 16.5" fill="none" stroke="#1a1a1a" stroke-width="1.2" /><circle cx="8.5" cy="16.5" r="2" fill="none" stroke="#1a1a1a" stroke-width="1"/><text x="15" y="21.5" font-family="Liberation Sans" font-size="8" font-weight="normal" fill="#1a1a1a" text-anchor="start" >.1</text><path d="M11 13 L21 3 L23 5 L13 15 Z" fill="#f0b030" stroke="#c06010" stroke-width="0.5" /><path d="M21 3 L23 5 L24 2 Z" fill="#e8141e" stroke="none" stroke-width="1.2" /></svg></div>
<div class="b g" style="left:904px;top:61px;width:29px;height:29px"><svg width="29" height="29" viewBox="0 0 29 29"><path d="M4 23 L4 15 L11 10 L24 10 L24 23 Z" fill="none" stroke="#333" stroke-width="1.2" /><line x1="4" y1="23" x2="10" y2="13" stroke="#777" stroke-width="0.6" /><line x1="7" y1="23" x2="13" y2="13" stroke="#777" stroke-width="0.6" /><line x1="10" y1="23" x2="16" y2="13" stroke="#777" stroke-width="0.6" /><line x1="13" y1="23" x2="19" y2="13" stroke="#777" stroke-width="0.6" /><line x1="16" y1="23" x2="22" y2="13" stroke="#777" stroke-width="0.6" /><line x1="19" y1="23" x2="25" y2="13" stroke="#777" stroke-width="0.6" /><circle cx="13" cy="18" r="2.8" fill="none" stroke="#333" stroke-width="1"/><path d="M11 13 L21 3 L23 5 L13 15 Z" fill="#f0b030" stroke="#c06010" stroke-width="0.5" /><path d="M21 3 L23 5 L24 2 Z" fill="#e8141e" stroke="none" stroke-width="1.2" /></svg></div>
<div class="b g" style="left:963px;top:61px;width:12px;height:29px"><svg width="12" height="29" viewBox="0 0 12 29"><path d="M3.5 11 L6 14 L3.5 17 M7 11 L9.5 14 L7 17" fill="none" stroke="#333" stroke-width="1.1" /></svg></div>
<svg style="position:absolute;left:983px;top:67px;" width="7" height="19" viewBox="0 0 7 19"><rect x="1" y="1" width="1" height="1" fill="#f4faf4"/><rect x="0" y="0" width="1" height="1" fill="#8c9a8c"/><rect x="4" y="1" width="1" height="1" fill="#f4faf4"/><rect x="3" y="0" width="1" height="1" fill="#8c9a8c"/><rect x="1" y="4" width="1" height="1" fill="#f4faf4"/><rect x="0" y="3" width="1" height="1" fill="#8c9a8c"/><rect x="4" y="4" width="1" height="1" fill="#f4faf4"/><rect x="3" y="3" width="1" height="1" fill="#8c9a8c"/><rect x="1" y="7" width="1" height="1" fill="#f4faf4"/><rect x="0" y="6" width="1" height="1" fill="#8c9a8c"/><rect x="4" y="7" width="1" height="1" fill="#f4faf4"/><rect x="3" y="6" width="1" height="1" fill="#8c9a8c"/><rect x="1" y="10" width="1" height="1" fill="#f4faf4"/><rect x="0" y="9" width="1" height="1" fill="#8c9a8c"/><rect x="4" y="10" width="1" height="1" fill="#f4faf4"/><rect x="3" y="9" width="1" height="1" fill="#8c9a8c"/><rect x="1" y="13" width="1" height="1" fill="#f4faf4"/><rect x="0" y="12" width="1" height="1" fill="#8c9a8c"/><rect x="4" y="13" width="1" height="1" fill="#f4faf4"/><rect x="3" y="12" width="1" height="1" fill="#8c9a8c"/><rect x="1" y="16" width="1" height="1" fill="#f4faf4"/><rect x="0" y="15" width="1" height="1" fill="#8c9a8c"/><rect x="4" y="16" width="1" height="1" fill="#f4faf4"/><rect x="3" y="15" width="1" height="1" fill="#8c9a8c"/></svg>
<div class="b" style="left:991px;top:66px;width:92px;height:19px;border-radius:4px"></div>
<div class="t" style="left:998px;top:68px;font-size:13px;color:#2a4a2a;width:70px;overflow:hidden">G-Code (G4</div>
<div style="left:1067px;top:68px;width:14px;height:15px;border:1px solid #f4f8f4;border-right-color:#555;border-bottom-color:#555;background:linear-gradient(#7aae7a,#b4d4b4)"><svg width="12" height="13" style="left:0;top:0"><path d="M2.5 5 L9.5 5 L6 9 Z" fill="#3a6a3a"/></svg></div>
<div class="b g" style="left:1085px;top:61px;width:12px;height:29px"><svg width="12" height="29" viewBox="0 0 12 29"><path d="M3.5 11 L6 14 L3.5 17 M7 11 L9.5 14 L7 17" fill="none" stroke="#333" stroke-width="1.1" /></svg></div>
<svg style="position:absolute;left:5px;top:104px;" width="7" height="19" viewBox="0 0 7 19"><rect x="1" y="1" width="1" height="1" fill="#f4faf4"/><rect x="0" y="0" width="1" height="1" fill="#8c9a8c"/><rect x="4" y="1" width="1" height="1" fill="#f4faf4"/><rect x="3" y="0" width="1" height="1" fill="#8c9a8c"/><rect x="1" y="4" width="1" height="1" fill="#f4faf4"/><rect x="0" y="3" width="1" height="1" fill="#8c9a8c"/><rect x="4" y="4" width="1" height="1" fill="#f4faf4"/><rect x="3" y="3" width="1" height="1" fill="#8c9a8c"/><rect x="1" y="7" width="1" height="1" fill="#f4faf4"/><rect x="0" y="6" width="1" height="1" fill="#8c9a8c"/><rect x="4" y="7" width="1" height="1" fill="#f4faf4"/><rect x="3" y="6" width="1" height="1" fill="#8c9a8c"/><rect x="1" y="10" width="1" height="1" fill="#f4faf4"/><rect x="0" y="9" width="1" height="1" fill="#8c9a8c"/><rect x="4" y="10" width="1" height="1" fill="#f4faf4"/><rect x="3" y="9" width="1" height="1" fill="#8c9a8c"/><rect x="1" y="13" width="1" height="1" fill="#f4faf4"/><rect x="0" y="12" width="1" height="1" fill="#8c9a8c"/><rect x="4" y="13" width="1" height="1" fill="#f4faf4"/><rect x="3" y="12" width="1" height="1" fill="#8c9a8c"/><rect x="1" y="16" width="1" height="1" fill="#f4faf4"/><rect x="0" y="15" width="1" height="1" fill="#8c9a8c"/><rect x="4" y="16" width="1" height="1" fill="#f4faf4"/><rect x="3" y="15" width="1" height="1" fill="#8c9a8c"/></svg>
<div class="b g" style="left:13px;top:98px;width:29px;height:29px"><svg width="29" height="29" viewBox="0 0 29 29"><line x1="5" y1="20" x2="21.7" y2="9" stroke="#1a1a1a" stroke-width="1.1" /><circle cx="5" cy="20" r="1.8" fill="#e8141e"/><circle cx="21.7" cy="9" r="1.8" fill="#e8141e"/></svg></div>
<div class="b g" style="left:43px;top:98px;width:29px;height:29px"><svg width="29" height="29" viewBox="0 0 29 29"><line x1="6.5" y1="18.8" x2="22" y2="9" stroke="#1a1a1a" stroke-width="1.1" /><line x1="7" y1="18.8" x2="23.5" y2="18.8" stroke="#6a8ae0" stroke-width="1.2" stroke-dasharray="1.2 0.6"/><path d="M17.5 11.5 Q20 15 19.5 18.5" fill="none" stroke="#e06050" stroke-width="0.9" /><circle cx="6.5" cy="18.8" r="1.8" fill="#e8141e"/></svg></div>
<div class="b g" style="left:73px;top:98px;width:29px;height:29px"><svg width="29" height="29" viewBox="0 0 29 29"><line x1="7" y1="13.5" x2="22.5" y2="13.5" stroke="#1a1a1a" stroke-width="1" /><circle cx="7" cy="13.5" r="1.8" fill="#e8141e"/></svg></div>
<div class="b g" style="left:103px;top:98px;width:29px;height:29px"><svg width="29" height="29" viewBox="0 0 29 29"><line x1="13.5" y1="5" x2="13.5" y2="20" stroke="#1a1a1a" stroke-width="1" /><circle cx="13.5" cy="20.5" r="1.8" fill="#e8141e"/></svg></div>
<div style="left:135px;top:101px;width:1px;height:24px;background:#a9c8a9;border-right:1px solid #e2eee2"></div>
<div class="b g" style="left:140px;top:98px;width:29px;height:29px"><svg width="29" height="29" viewBox="0 0 29 29"><line x1="4.5" y1="19" x2="14.5" y2="4.5" stroke="#e03a2a" stroke-width="1.2" /><line x1="4.5" y1="19" x2="23" y2="19" stroke="#e06050" stroke-width="2" /><line x1="4.5" y1="19" x2="21.5" y2="8.5" stroke="#1a1a1a" stroke-width="1" /><path d="M14 7 Q18 13 17.5 19" fill="none" stroke="#3a5ee0" stroke-width="0.8" /><rect x="17" y="6.5" width="3" height="1" fill="#3a5ee0" stroke="none" stroke-width="1" rx="0" /><rect x="17" y="8" width="3" height="1" fill="#3a5ee0" stroke="none" stroke-width="1" rx="0" /><rect x="20" y="12.5" width="3" height="1" fill="#3a5ee0" stroke="none" stroke-width="1" rx="0" /><rect x="20" y="14" width="3" height="1" fill="#3a5ee0" stroke="none" stroke-width="1" rx="0" /></svg></div>
<div style="left:173px;top:101px;width:1px;height:24px;background:#a9c8a9;border-right:1px solid #e2eee2"></div>
<div class="b g" style="left:177px;top:98px;width:29px;height:29px"><svg width="29" height="29" viewBox="0 0 29 29"><line x1="4" y1="14" x2="20.5" y2="6.5" stroke="#e03a2a" stroke-width="1.2" /><line x1="8" y1="21.5" x2="24" y2="13.5" stroke="#1a1a1a" stroke-width="1.2" /><line x1="11.5" y1="12.5" x2="14" y2="19.5" stroke="#4a6ad8" stroke-width="1" /></svg></div>
<div style="left:210px;top:101px;width:1px;height:24px;background:#a9c8a9;border-right:1px solid #e2eee2"></div>
<div class="b g" style="left:214px;top:98px;width:29px;height:29px"><svg width="29" height="29" viewBox="0 0 29 29"><circle cx="9" cy="15" r="5" fill="none" stroke="#e03a2a" stroke-width="1"/><line x1="8" y1="10" x2="22" y2="6" stroke="#1a1a1a" stroke-width="1" /><circle cx="22" cy="6" r="1.8" fill="#e8141e"/></svg></div>
<div class="b g" style="left:244px;top:98px;width:29px;height:29px"><svg width="29" height="29" viewBox="0 0 29 29"><circle cx="8.5" cy="15" r="5" fill="none" stroke="#e03a2a" stroke-width="1"/><line x1="8" y1="10" x2="20" y2="8" stroke="#1a1a1a" stroke-width="1" /><circle cx="21.5" cy="8.5" r="1.8" fill="none" stroke="#e03a2a" stroke-width="1"/></svg></div>
<div class="b g" style="left:274px;top:98px;width:29px;height:29px"><svg width="29" height="29" viewBox="0 0 29 29"><circle cx="9" cy="15.5" r="5.5" fill="none" stroke="#e03a2a" stroke-width="1"/><line x1="7.5" y1="10.5" x2="19" y2="3.5" stroke="#1a1a1a" stroke-width="1" /><line x1="17.5" y1="3" x2="23.5" y2="12.5" stroke="#e03a2a" stroke-width="1.1" /></svg></div>
<div style="left:307px;top:101px;width:1px;height:24px;background:#a9c8a9;border-right:1px solid #e2eee2"></div>
<div class="b g" style="left:311px;top:98px;width:29px;height:29px"><svg width="29" height="29" viewBox="0 0 29 29"><line x1="4" y1="22" x2="23.5" y2="6" stroke="#1a1a1a" stroke-width="1" /><line x1="11.5" y1="22" x2="17" y2="6" stroke="#1a1a1a" stroke-width="1" /><circle cx="13.5" cy="14" r="1.8" fill="#e8141e"/><path d="M15.5 8 L18 11" fill="none" stroke="#e06050" stroke-width="0.8" /></svg></div>
<div class="b g" style="left:341px;top:98px;width:29px;height:29px"><svg width="29" height="29" viewBox="0 0 29 29"><line x1="4" y1="22" x2="23.5" y2="6" stroke="#1a1a1a" stroke-width="1" /><line x1="9" y1="8" x2="19" y2="18" stroke="#1a1a1a" stroke-width="1" /><circle cx="13.5" cy="14" r="1.8" fill="#e8141e"/></svg></div>
<svg style="position:absolute;left:379px;top:104px;" width="7" height="19" viewBox="0 0 7 19"><rect x="1" y="1" width="1" height="1" fill="#f4faf4"/><rect x="0" y="0" width="1" height="1" fill="#8c9a8c"/><rect x="4" y="1" width="1" height="1" fill="#f4faf4"/><rect x="3" y="0" width="1" height="1" fill="#8c9a8c"/><rect x="1" y="4" width="1" height="1" fill="#f4faf4"/><rect x="0" y="3" width="1" height="1" fill="#8c9a8c"/><rect x="4" y="4" width="1" height="1" fill="#f4faf4"/><rect x="3" y="3" width="1" height="1" fill="#8c9a8c"/><rect x="1" y="7" width="1" height="1" fill="#f4faf4"/><rect x="0" y="6" width="1" height="1" fill="#8c9a8c"/><rect x="4" y="7" width="1" height="1" fill="#f4faf4"/><rect x="3" y="6" width="1" height="1" fill="#8c9a8c"/><rect x="1" y="10" width="1" height="1" fill="#f4faf4"/><rect x="0" y="9" width="1" height="1" fill="#8c9a8c"/><rect x="4" y="10" width="1" height="1" fill="#f4faf4"/><rect x="3" y="9" width="1" height="1" fill="#8c9a8c"/><rect x="1" y="13" width="1" height="1" fill="#f4faf4"/><rect x="0" y="12" width="1" height="1" fill="#8c9a8c"/><rect x="4" y="13" width="1" height="1" fill="#f4faf4"/><rect x="3" y="12" width="1" height="1" fill="#8c9a8c"/><rect x="1" y="16" width="1" height="1" fill="#f4faf4"/><rect x="0" y="15" width="1" height="1" fill="#8c9a8c"/><rect x="4" y="16" width="1" height="1" fill="#f4faf4"/><rect x="3" y="15" width="1" height="1" fill="#8c9a8c"/></svg>
<div class="b g" style="left:387px;top:98px;width:29px;height:29px"><svg width="29" height="29" viewBox="0 0 29 29"><circle cx="13.5" cy="14" r="8" fill="none" stroke="#1a1a1a" stroke-width="1.1"/><circle cx="13.5" cy="14" r="1.8" fill="#e8141e"/><circle cx="17.5" cy="6.5" r="1.8" fill="#e8141e"/></svg></div>
<div style="left:420px;top:101px;width:1px;height:24px;background:#a9c8a9;border-right:1px solid #e2eee2"></div>
<div class="b g" style="left:424px;top:98px;width:29px;height:29px"><svg width="29" height="29" viewBox="0 0 29 29"><rect x="5" y="5.5" width="17" height="17" fill="none" stroke="#5a78d8" stroke-width="0.6" rx="0" stroke-dasharray="1 1"/><circle cx="13.5" cy="14" r="8.3" fill="none" stroke="#1a1a1a" stroke-width="1.1"/><line x1="13.5" y1="14" x2="20" y2="8" stroke="#e06050" stroke-width="0.9" /><circle cx="13.5" cy="14" r="1.8" fill="#e8141e"/></svg></div>
<div class="b g" style="left:454px;top:98px;width:29px;height:29px"><svg width="29" height="29" viewBox="0 0 29 29"><rect x="5" y="5.5" width="17" height="17" fill="none" stroke="#5a78d8" stroke-width="0.6" rx="0" stroke-dasharray="1 1"/><circle cx="13.5" cy="14" r="8.3" fill="none" stroke="#1a1a1a" stroke-width="1.1"/><line x1="7" y1="20" x2="20" y2="8" stroke="#e06050" stroke-width="0.9" /><circle cx="13.5" cy="14" r="1.8" fill="#e8141e"/></svg></div>
<div style="left:487px;top:101px;width:1px;height:24px;background:#a9c8a9;border-right:1px solid #e2eee2"></div>
<div class="b g" style="left:491px;top:98px;width:29px;height:29px"><svg width="29" height="29" viewBox="0 0 29 29"><circle cx="13.9" cy="13.8" r="8.8" fill="none" stroke="#1a1a1a" stroke-width="1.1"/><line x1="14" y1="14" x2="19" y2="7" stroke="#e06050" stroke-width="0.8" /><circle cx="6.5" cy="17.8" r="1.8" fill="#e8141e"/><circle cx="18.5" cy="21" r="1.8" fill="#e8141e"/></svg></div>
<div style="left:524px;top:101px;width:1px;height:24px;background:#a9c8a9;border-right:1px solid #e2eee2"></div>
<div class="b g" style="left:528px;top:98px;width:29px;height:29px"><svg width="29" height="29" viewBox="0 0 29 29"><circle cx="13.5" cy="13.5" r="8.8" fill="none" stroke="#1a1a1a" stroke-width="1.1"/><line x1="7" y1="17.5" x2="21" y2="6.5" stroke="#3a5ee0" stroke-width="1" /><circle cx="7" cy="17.5" r="1.8" fill="#e8141e"/><circle cx="21" cy="6.5" r="1.8" fill="#e8141e"/></svg></div>
<div class="b g" style="left:558px;top:98px;width:29px;height:29px"><svg width="29" height="29" viewBox="0 0 29 29"><circle cx="13.5" cy="13.5" r="8.5" fill="none" stroke="#1a1a1a" stroke-width="1.1"/><circle cx="11" cy="5" r="1.8" fill="#e8141e"/><circle cx="6" cy="16" r="1.8" fill="#e8141e"/><circle cx="18" cy="21" r="1.8" fill="#e8141e"/></svg></div>
<div style="left:591px;top:101px;width:1px;height:24px;background:#a9c8a9;border-right:1px solid #e2eee2"></div>
<div class="b g" style="left:595px;top:98px;width:29px;height:29px"><svg width="29" height="29" viewBox="0 0 29 29"><path d="M3 5 L7 14 L5 24 M6 6 L8 18 L8 25 M3 12 L8 10" fill="none" stroke="#e03a2a" stroke-width="0.9" /><circle cx="14.5" cy="14" r="8" fill="none" stroke="#1a1a1a" stroke-width="1.1"/><circle cx="17" cy="5.5" r="1.8" fill="#e8141e"/><circle cx="21.5" cy="14.5" r="1.8" fill="#e8141e"/></svg></div>
<div class="b g" style="left:625px;top:98px;width:29px;height:29px"><svg width="29" height="29" viewBox="0 0 29 29"><path d="M3 5 L7 14 L5 24 M6 6 L8 18 L8 25 M3 12 L8 10" fill="none" stroke="#e03a2a" stroke-width="0.9" /><circle cx="14.5" cy="14" r="8" fill="none" stroke="#1a1a1a" stroke-width="1.1"/><line x1="14.5" y1="14" x2="18" y2="6" stroke="#e06050" stroke-width="0.8" /><circle cx="21.5" cy="15.5" r="1.8" fill="#e8141e"/></svg></div>
<div class="b g" style="left:655px;top:98px;width:29px;height:29px"><svg width="29" height="29" viewBox="0 0 29 29"><path d="M3 5 L7 14 L5 24 M6 6 L8 18 L8 25 M3 12 L8 10" fill="none" stroke="#e03a2a" stroke-width="0.9" /><path d="M7 24 L24 15 M10 25 L22 17" fill="none" stroke="#e03a2a" stroke-width="0.9" /><circle cx="14" cy="13.5" r="7.5" fill="none" stroke="#1a1a1a" stroke-width="1.1"/><circle cx="16.5" cy="5.5" r="1.8" fill="#e8141e"/></svg></div>
<div class="b g" style="left:685px;top:98px;width:29px;height:29px"><svg width="29" height="29" viewBox="0 0 29 29"><path d="M3 8 L13 22 L13 26 M4 12 L10 21 M24 8 L14 22 M21 11 L16 24" fill="none" stroke="#e03a2a" stroke-width="0.9" /><circle cx="14" cy="13" r="7" fill="none" stroke="#1a1a1a" stroke-width="1.1"/><line x1="14" y1="13" x2="18" y2="7" stroke="#e06050" stroke-width="0.8" /></svg></div>
<div class="b g" style="left:715px;top:98px;width:29px;height:29px"><svg width="29" height="29" viewBox="0 0 29 29"><path d="M4 7 L12 6 L22 4 M8 5 L20 6 M4 12 L9 19 L13 25 M24 12 L17 21 L13 25 M5 14 L8 22" fill="none" stroke="#e03a2a" stroke-width="0.9" /><circle cx="14" cy="13.5" r="6.5" fill="none" stroke="#1a1a1a" stroke-width="1.1"/></svg></div>
<svg style="position:absolute;left:753px;top:104px;" width="7" height="19" viewBox="0 0 7 19"><rect x="1" y="1" width="1" height="1" fill="#f4faf4"/><rect x="0" y="0" width="1" height="1" fill="#8c9a8c"/><rect x="4" y="1" width="1" height="1" fill="#f4faf4"/><rect x="3" y="0" width="1" height="1" fill="#8c9a8c"/><rect x="1" y="4" width="1" height="1" fill="#f4faf4"/><rect x="0" y="3" width="1" height="1" fill="#8c9a8c"/><rect x="4" y="4" width="1" height="1" fill="#f4faf4"/><rect x="3" y="3" width="1" height="1" fill="#8c9a8c"/><rect x="1" y="7" width="1" height="1" fill="#f4faf4"/><rect x="0" y="6" width="1" height="1" fill="#8c9a8c"/><rect x="4" y="7" width="1" height="1" fill="#f4faf4"/><rect x="3" y="6" width="1" height="1" fill="#8c9a8c"/><rect x="1" y="10" width="1" height="1" fill="#f4faf4"/><rect x="0" y="9" width="1" height="1" fill="#8c9a8c"/><rect x="4" y="10" width="1" height="1" fill="#f4faf4"/><rect x="3" y="9" width="1" height="1" fill="#8c9a8c"/><rect x="1" y="13" width="1" height="1" fill="#f4faf4"/><rect x="0" y="12" width="1" height="1" fill="#8c9a8c"/><rect x="4" y="13" width="1" height="1" fill="#f4faf4"/><rect x="3" y="12" width="1" height="1" fill="#8c9a8c"/><rect x="1" y="16" width="1" height="1" fill="#f4faf4"/><rect x="0" y="15" width="1" height="1" fill="#8c9a8c"/><rect x="4" y="16" width="1" height="1" fill="#f4faf4"/><rect x="3" y="15" width="1" height="1" fill="#8c9a8c"/></svg>
<div class="b g" style="left:761px;top:98px;width:29px;height:29px"><svg width="29" height="29" viewBox="0 0 29 29"><path d="M6 14 Q12 6 21 5" fill="none" stroke="#1a1a1a" stroke-width="1.1" /><line x1="5" y1="13" x2="7.5" y2="15" stroke="#e03a2a" stroke-width="0.9" /><line x1="21" y1="3.5" x2="21" y2="7" stroke="#e03a2a" stroke-width="0.9" /><circle cx="21" cy="21.5" r="1.8" fill="#e8141e"/></svg></div>
<div style="left:795px;top:101px;width:1px;height:24px;background:#a9c8a9;border-right:1px solid #e2eee2"></div>
<div class="b g" style="left:798px;top:98px;width:29px;height:29px"><svg width="29" height="29" viewBox="0 0 29 29"><path d="M5 19.5 Q7 7 21.5 5" fill="none" stroke="#1a1a1a" stroke-width="1.1" /><line x1="11" y1="8.5" x2="21" y2="19" stroke="#e06050" stroke-width="0.9" /><circle cx="5" cy="19.5" r="1.8" fill="#e8141e"/><circle cx="21.5" cy="5" r="1.8" fill="#e8141e"/></svg></div>
<div class="b g" style="left:828px;top:98px;width:29px;height:29px"><svg width="29" height="29" viewBox="0 0 29 29"><path d="M5 19.5 Q7 7 21.5 5" fill="none" stroke="#1a1a1a" stroke-width="1.1" /><path d="M14 19.5 Q14 14 19.5 14" fill="none" stroke="#e06050" stroke-width="0.9" /><line x1="5" y1="19.5" x2="21" y2="19.5" stroke="#7a8ad8" stroke-width="0.6" stroke-dasharray="1 1"/><line x1="21" y1="5" x2="21" y2="19.5" stroke="#7a8ad8" stroke-width="0.6" stroke-dasharray="1 1"/><circle cx="5" cy="19.5" r="1.8" fill="#e8141e"/><circle cx="21.5" cy="5" r="1.8" fill="#e8141e"/></svg></div>
<div class="b g" style="left:858px;top:98px;width:29px;height:29px"><svg width="29" height="29" viewBox="0 0 29 29"><path d="M5 20 Q6 6 21.5 5" fill="none" stroke="#1a1a1a" stroke-width="1.1" /><path d="M9 21 Q10 11 21 9" fill="none" stroke="#e06050" stroke-width="0.9" /><circle cx="5" cy="20" r="1.8" fill="#e8141e"/><circle cx="21.5" cy="5" r="1.8" fill="#e8141e"/></svg></div>
<div class="b g" style="left:888px;top:98px;width:29px;height:29px"><svg width="29" height="29" viewBox="0 0 29 29"><path d="M4.5 18.5 A9 9 0 0 1 22.5 18.5" fill="none" stroke="#1a1a1a" stroke-width="1.1" /><line x1="13.5" y1="9.5" x2="13.5" y2="18.5" stroke="#e06050" stroke-width="0.9" /><line x1="4.5" y1="18.5" x2="22.5" y2="18.5" stroke="#7a8ad8" stroke-width="0.6" stroke-dasharray="1 1"/><circle cx="4.5" cy="18.5" r="1.8" fill="#e8141e"/><circle cx="22.5" cy="18.5" r="1.8" fill="#e8141e"/></svg></div>
<div style="left:921px;top:101px;width:1px;height:24px;background:#a9c8a9;border-right:1px solid #e2eee2"></div>
<div class="b g" style="left:925px;top:98px;width:29px;height:29px"><svg width="29" height="29" viewBox="0 0 29 29"><path d="M5.5 21 Q4 8 11 6 Q17 4 22 8" fill="none" stroke="#1a1a1a" stroke-width="1.1" /><circle cx="5.5" cy="21" r="1.8" fill="#e8141e"/><circle cx="11" cy="6" r="1.8" fill="#e8141e"/><circle cx="22" cy="8" r="1.8" fill="#e8141e"/></svg></div>
<div style="left:958px;top:101px;width:1px;height:24px;background:#a9c8a9;border-right:1px solid #e2eee2"></div>
<div class="b g" style="left:962px;top:98px;width:29px;height:29px"><svg width="29" height="29" viewBox="0 0 29 29"><line x1="4" y1="17" x2="15" y2="11" stroke="#e03a2a" stroke-width="1" /><path d="M15 11 Q21 8 22 17" fill="none" stroke="#1a1a1a" stroke-width="1.1" /><line x1="17" y1="15" x2="22" y2="17" stroke="#e03a2a" stroke-width="0.8" /><circle cx="22" cy="17" r="1.8" fill="#e8141e"/></svg></div>
<div class="b g" style="left:992px;top:98px;width:29px;height:29px"><svg width="29" height="29" viewBox="0 0 29 29"><line x1="5" y1="3" x2="5" y2="24" stroke="#e03a2a" stroke-width="1.1" /><path d="M5 24 Q5 8 21.5 5" fill="none" stroke="#1a1a1a" stroke-width="1.1" /><line x1="10" y1="10" x2="21" y2="22" stroke="#e06050" stroke-width="0.9" /><circle cx="21.5" cy="5" r="1.8" fill="#e8141e"/></svg></div>
<svg style="position:absolute;left:1030px;top:104px;" width="7" height="19" viewBox="0 0 7 19"><rect x="1" y="1" width="1" height="1" fill="#f4faf4"/><rect x="0" y="0" width="1" height="1" fill="#8c9a8c"/><rect x="4" y="1" width="1" height="1" fill="#f4faf4"/><rect x="3" y="0" width="1" height="1" fill="#8c9a8c"/><rect x="1" y="4" width="1" height="1" fill="#f4faf4"/><rect x="0" y="3" width="1" height="1" fill="#8c9a8c"/><rect x="4" y="4" width="1" height="1" fill="#f4faf4"/><rect x="3" y="3" width="1" height="1" fill="#8c9a8c"/><rect x="1" y="7" width="1" height="1" fill="#f4faf4"/><rect x="0" y="6" width="1" height="1" fill="#8c9a8c"/><rect x="4" y="7" width="1" height="1" fill="#f4faf4"/><rect x="3" y="6" width="1" height="1" fill="#8c9a8c"/><rect x="1" y="10" width="1" height="1" fill="#f4faf4"/><rect x="0" y="9" width="1" height="1" fill="#8c9a8c"/><rect x="4" y="10" width="1" height="1" fill="#f4faf4"/><rect x="3" y="9" width="1" height="1" fill="#8c9a8c"/><rect x="1" y="13" width="1" height="1" fill="#f4faf4"/><rect x="0" y="12" width="1" height="1" fill="#8c9a8c"/><rect x="4" y="13" width="1" height="1" fill="#f4faf4"/><rect x="3" y="12" width="1" height="1" fill="#8c9a8c"/><rect x="1" y="16" width="1" height="1" fill="#f4faf4"/><rect x="0" y="15" width="1" height="1" fill="#8c9a8c"/><rect x="4" y="16" width="1" height="1" fill="#f4faf4"/><rect x="3" y="15" width="1" height="1" fill="#8c9a8c"/></svg>
<div class="b d" style="left:1038px;top:98px;width:29px;height:29px"><svg width="29" height="29" viewBox="0 0 29 29"><rect x="4" y="6" width="19" height="14" fill="#ffffff" stroke="#777" stroke-width="1.2" rx="0" /><path d="M6 18 L11 12 L15 16 L18 13 L21 18 Z" fill="none" stroke="#9a9a9a" stroke-width="0.8" /><circle cx="18.5" cy="9.5" r="1.6" fill="none" stroke="#9a9a9a" stroke-width="0.8"/></svg></div>
<div style="left:1072px;top:101px;width:1px;height:24px;background:#a9c8a9;border-right:1px solid #e2eee2"></div>
<div class="b g" style="left:1085px;top:98px;width:12px;height:29px"><svg width="12" height="29" viewBox="0 0 12 29"><path d="M3.5 11 L6 14 L3.5 17 M7 11 L9.5 14 L7 17" fill="none" stroke="#333" stroke-width="1.1" /></svg></div>
<svg style="position:absolute;left:26px;top:137px;" width="22" height="7" viewBox="0 0 22 7"><rect x="1" y="1" width="1" height="1" fill="#f4faf4"/><rect x="0" y="0" width="1" height="1" fill="#8c9a8c"/><rect x="4" y="1" width="1" height="1" fill="#f4faf4"/><rect x="3" y="0" width="1" height="1" fill="#8c9a8c"/><rect x="7" y="1" width="1" height="1" fill="#f4faf4"/><rect x="6" y="0" width="1" height="1" fill="#8c9a8c"/><rect x="10" y="1" width="1" height="1" fill="#f4faf4"/><rect x="9" y="0" width="1" height="1" fill="#8c9a8c"/><rect x="13" y="1" width="1" height="1" fill="#f4faf4"/><rect x="12" y="0" width="1" height="1" fill="#8c9a8c"/><rect x="16" y="1" width="1" height="1" fill="#f4faf4"/><rect x="15" y="0" width="1" height="1" fill="#8c9a8c"/><rect x="19" y="1" width="1" height="1" fill="#f4faf4"/><rect x="18" y="0" width="1" height="1" fill="#8c9a8c"/><rect x="1" y="4" width="1" height="1" fill="#f4faf4"/><rect x="0" y="3" width="1" height="1" fill="#8c9a8c"/><rect x="4" y="4" width="1" height="1" fill="#f4faf4"/><rect x="3" y="3" width="1" height="1" fill="#8c9a8c"/><rect x="7" y="4" width="1" height="1" fill="#f4faf4"/><rect x="6" y="3" width="1" height="1" fill="#8c9a8c"/><rect x="10" y="4" width="1" height="1" fill="#f4faf4"/><rect x="9" y="3" width="1" height="1" fill="#8c9a8c"/><rect x="13" y="4" width="1" height="1" fill="#f4faf4"/><rect x="12" y="3" width="1" height="1" fill="#8c9a8c"/><rect x="16" y="4" width="1" height="1" fill="#f4faf4"/><rect x="15" y="3" width="1" height="1" fill="#8c9a8c"/><rect x="19" y="4" width="1" height="1" fill="#f4faf4"/><rect x="18" y="3" width="1" height="1" fill="#8c9a8c"/></svg>
<div class="b g" style="left:4px;top:146px;width:29px;height:29px"><svg width="29" height="29" viewBox="0 0 29 29"><line x1="6.9" y1="9.5" x2="12.1" y2="9.5" stroke="#1a1a1a" stroke-width="1.1" /><line x1="9.5" y1="6.9" x2="9.5" y2="12.1" stroke="#1a1a1a" stroke-width="1.1" /><line x1="17.9" y1="15.5" x2="23.1" y2="15.5" stroke="#1a1a1a" stroke-width="1.1" /><line x1="20.5" y1="12.9" x2="20.5" y2="18.1" stroke="#1a1a1a" stroke-width="1.1" /><line x1="7.4" y1="21" x2="12.6" y2="21" stroke="#1a1a1a" stroke-width="1.1" /><line x1="10" y1="18.4" x2="10" y2="23.6" stroke="#1a1a1a" stroke-width="1.1" /><path d="M27 24 L27 27 L24 27 Z" fill="#111"/></svg></div>
<div class="b g" style="left:34px;top:146px;width:29px;height:29px"><svg width="29" height="29" viewBox="0 0 29 29"><line x1="4.5" y1="20" x2="24.5" y2="10.5" stroke="#1a1a1a" stroke-width="1" /><path d="M27 24 L27 27 L24 27 Z" fill="#111"/></svg></div>
<div class="b g" style="left:4px;top:176px;width:29px;height:29px"><svg width="29" height="29" viewBox="0 0 29 29"><path d="M6 22.5 Q7 9 22 7" fill="none" stroke="#1a1a1a" stroke-width="1" /><path d="M27 24 L27 27 L24 27 Z" fill="#111"/></svg></div>
<div class="b g" style="left:34px;top:176px;width:29px;height:29px"><svg width="29" height="29" viewBox="0 0 29 29"><circle cx="15" cy="15" r="8.3" fill="none" stroke="#1a1a1a" stroke-width="1"/><path d="M27 24 L27 27 L24 27 Z" fill="#111"/></svg></div>
<div class="b g" style="left:4px;top:206px;width:29px;height:29px"><svg width="29" height="29" viewBox="0 0 29 29"><ellipse cx="14.5" cy="15" rx="10.5" ry="4.8" transform="rotate(-52 14.5 15)" fill="none" stroke="#1a1a1a" stroke-width="1"/><path d="M27 24 L27 27 L24 27 Z" fill="#111"/></svg></div>
<div class="b g" style="left:34px;top:206px;width:29px;height:29px"><svg width="29" height="29" viewBox="0 0 29 29"><path d="M8 12 Q6 5 11 7 Q16 11 19 20 Q22 24 24 19 Q25 14 20 12 Q14 14 12 20 Q9 26 8 12" fill="none" stroke="#1a1a1a" stroke-width="1" /><path d="M27 24 L27 27 L24 27 Z" fill="#111"/></svg></div>
<div class="b g" style="left:4px;top:236px;width:29px;height:29px"><svg width="29" height="29" viewBox="0 0 29 29"><path d="M13 10 Q7 10 7 15 Q7 19 12 19 L22 19" fill="none" stroke="#1a1a1a" stroke-width="1" /><path d="M27 24 L27 27 L24 27 Z" fill="#111"/></svg></div>
<div class="b g" style="left:34px;top:236px;width:29px;height:29px"><svg width="29" height="29" viewBox="0 0 29 29"><path d="M7 4 L12.5 4 L15 8.5 L12.5 13 L7 13 L4.5 8.5 Z" fill="none" stroke="#333" stroke-width="1" /><path d="M20 8.5 L24.5 16 L16 16 Z" fill="none" stroke="#333" stroke-width="1" /><rect x="5" y="17.5" width="12.5" height="6" fill="none" stroke="#333" stroke-width="1" rx="0" /><path d="M27 24 L27 27 L24 27 Z" fill="#111"/></svg></div>
<div class="b g" style="left:4px;top:266px;width:29px;height:29px"><svg width="29" height="29" viewBox="0 0 29 29"><path d="M4 23 L4 14 L10 9 L24 9 L24 23 Z" fill="#c0d8c0" stroke="#222" stroke-width="1" /><line x1="4.0" y1="23" x2="13.0" y2="13" stroke="#333" stroke-width="0.6" /><line x1="7.2" y1="23" x2="16.2" y2="13" stroke="#333" stroke-width="0.6" /><line x1="10.4" y1="23" x2="19.4" y2="13" stroke="#333" stroke-width="0.6" /><line x1="13.600000000000001" y1="23" x2="22.6" y2="13" stroke="#333" stroke-width="0.6" /><line x1="16.8" y1="23" x2="25.8" y2="13" stroke="#333" stroke-width="0.6" /><line x1="20.0" y1="23" x2="29.0" y2="13" stroke="#333" stroke-width="0.6" /><circle cx="16.5" cy="15.5" r="2.8" fill="#d8e8d8" stroke="#222" stroke-width="1"/><path d="M27 24 L27 27 L24 27 Z" fill="#111"/></svg></div>
<div class="b g" style="left:4px;top:304px;width:29px;height:29px"><svg width="29" height="29" viewBox="0 0 29 29"><text x="14.5" y="22.5" font-size="22" font-weight="normal" fill="#111" text-anchor="middle" font-family="Liberation Serif">A</text></svg></div>
<div class="b g" style="left:34px;top:304px;width:29px;height:29px"><svg width="29" height="29" viewBox="0 0 29 29"><line x1="6" y1="9" x2="6" y2="21" stroke="#333" stroke-width="1.2" /><line x1="21.5" y1="9" x2="21.5" y2="21" stroke="#333" stroke-width="1.2" /><line x1="6" y1="9" x2="21.5" y2="9" stroke="#222" stroke-width="0.9" /><path d="M6 9 L9.5 7.5 L9.5 10.5 Z M21.5 9 L18 7.5 L18 10.5 Z" fill="#222" stroke="none" stroke-width="1.2" /><path d="M27 24 L27 27 L24 27 Z" fill="#111"/></svg></div>
<div class="b g" style="left:4px;top:334px;width:29px;height:29px"><svg width="29" height="29" viewBox="0 0 29 29"><rect x="5" y="8.5" width="19" height="13.5" fill="#fff" stroke="#111" stroke-width="1.3" rx="0" /><path d="M6 20.5 L11 13.5 L14.5 17 L17.5 14 L23 20.5 Z" fill="#111" stroke="none" stroke-width="1.2" /><circle cx="19.5" cy="11.5" r="1.4" fill="#111" stroke="none" stroke-width="0"/></svg></div>
<div class="b g" style="left:4px;top:372px;width:29px;height:29px"><svg width="29" height="29" viewBox="0 0 29 29"><path d="M4 9 L4 25 L20 25 Z" fill="#fafafa" stroke="#111" stroke-width="1.1" /><path d="M7 17 L7 22 L12 22 Z" fill="none" stroke="#111" stroke-width="0.8" /><path d="M9 3.5 L18 10 L16.5 12 L7.5 5.5 Z" fill="#e82020" stroke="#900" stroke-width="0.5" /><path d="M22.5 3 L19 16 M22.5 3 L25 16" fill="none" stroke="#111" stroke-width="1.2" /><circle cx="22.5" cy="3.5" r="1" fill="none" stroke="#111" stroke-width="0.8"/><path d="M27 24 L27 27 L24 27 Z" fill="#111"/></svg></div>
<div class="b g" style="left:34px;top:372px;width:29px;height:29px"><svg width="29" height="29" viewBox="0 0 29 29"><rect x="4" y="11.5" width="21" height="7.5" fill="#fafafa" stroke="#999" stroke-width="1" rx="1" /><line x1="6.0" y1="12" x2="6.0" y2="13.5" stroke="#777" stroke-width="0.6" /><line x1="8.5" y1="12" x2="8.5" y2="14.5" stroke="#777" stroke-width="0.6" /><line x1="11.0" y1="12" x2="11.0" y2="13.5" stroke="#777" stroke-width="0.6" /><line x1="13.5" y1="12" x2="13.5" y2="14.5" stroke="#777" stroke-width="0.6" /><line x1="16.0" y1="12" x2="16.0" y2="13.5" stroke="#777" stroke-width="0.6" /><line x1="18.5" y1="12" x2="18.5" y2="14.5" stroke="#777" stroke-width="0.6" /><line x1="21.0" y1="12" x2="21.0" y2="13.5" stroke="#777" stroke-width="0.6" /><line x1="23.5" y1="12" x2="23.5" y2="14.5" stroke="#777" stroke-width="0.6" /></svg></div>
<div class="b d" style="left:4px;top:402px;width:29px;height:29px"><svg width="29" height="29" viewBox="0 0 29 29"><rect x="6" y="4" width="13" height="10" fill="#f8f8f8" stroke="#888" stroke-width="0.9" rx="0" /><circle cx="17" cy="16" r="5.5" fill="none" stroke="#999" stroke-width="0.9"/><line x1="4" y1="14" x2="10" y2="14" stroke="#aaa" stroke-width="0.6" /></svg></div>
<div class="b g" style="left:34px;top:402px;width:29px;height:29px"><svg width="29" height="29" viewBox="0 0 29 29"><line x1="4" y1="16" x2="20" y2="6.5" stroke="#e03020" stroke-width="1.1" /><path d="M14.5 11 L14.5 23 L17 20.5 L19 25 L20.8 24.2 L18.8 19.8 L22 19.8 Z" fill="#f0f0f0" stroke="#555" stroke-width="0.8" /><path d="M27 24 L27 27 L24 27 Z" fill="#111"/></svg></div>
<div class="b g" style="left:4px;top:440px;width:29px;height:29px"><svg width="29" height="29" viewBox="0 0 29 29"><path d="M7 9.5 L17 5 L24 8.5 L24 17 L14 22 L7 18.5 Z M7 9.5 L14 13 L24 8.5 M14 13 L14 22" fill="none" stroke="#111" stroke-width="1" /><path d="M27 24 L27 27 L24 27 Z" fill="#111"/></svg></div>
<div class="b g" style="left:4px;top:478px;width:29px;height:29px"><svg width="29" height="29" viewBox="0 0 29 29"><path d="M4 10 L9 5 M4 15 L14 5 M4 20 L19 5 M9 20 L19 10" fill="none" stroke="#d06040" stroke-width="0.9" /><rect x="4" y="5" width="15" height="15" fill="none" stroke="#c89070" stroke-width="0.5" rx="0" /><rect x="9.5" y="12" width="14" height="13" fill="#2f78e8" stroke="#1a4ab0" stroke-width="0.8" rx="1" /><rect x="11.5" y="13" width="10" height="5" fill="#f4f8ff" stroke="none" stroke-width="1" rx="0" /><path d="M6 15 L11 15 L11 13 L14 16 L11 19 L11 17 L6 17 Z" fill="#30b030" stroke="none" stroke-width="1.2" /><path d="M15 20 L23 7 L25 8.5 L17 21.5 Z" fill="#f3c21a" stroke="#c06010" stroke-width="0.5" /></svg></div>
<div class="b d" style="left:4px;top:516px;width:29px;height:29px"><svg width="29" height="29" viewBox="0 0 29 29"><path d="M5 12 L11 23 L16 6 Q24 11 22 22" fill="none" stroke="#888" stroke-width="0.9" /></svg></div>
<div class="b g" style="left:4px;top:555px;width:29px;height:29px"><svg width="29" height="29" viewBox="0 0 29 29"><path d="M4 12 L12 4 M4 18.5 L18.5 4 M4 25 L25 4 M10.5 25 L25 10.5 M17 25 L25 17" fill="none" stroke="#e06848" stroke-width="0.9" /></svg></div>
<div style="left:868px;top:131px;width:26px;height:82px;background:linear-gradient(90deg,#c4dec4,#cfe6cf);border:1px solid #8aa88a;border-right:none;border-top:none;border-radius:0 0 0 5px"></div>
<div style="left:870px;top:214px;width:24px;height:82px;background:#b2cdb2;border:1px solid #98b898;border-right:none;border-radius:5px 0 0 5px"></div>
<div class="t" style="left:841px;top:165px;width:80px;text-align:center;font-size:13px;color:#1f3a1f;letter-spacing:0.4px;-webkit-text-stroke:0.45px;transform:rotate(-90deg)">Layer List</div>
<div class="t" style="left:841px;top:247px;width:80px;text-align:center;font-size:13px;color:#1f3a1f;letter-spacing:0.4px;-webkit-text-stroke:0.45px;transform:rotate(-90deg)">Block List</div>
<div style="left:893px;top:213px;width:1px;height:144px;background:#98b898"></div>
<div class="t" style="left:900px;top:134px;font-size:13px;font-weight:bold;color:#1f3a1f;letter-spacing:0.45px">Layer List</div>
<svg style="position:absolute;left:1036px;top:135px;" width="26" height="12" viewBox="0 0 26 12"><rect x="1.5" y="0.5" width="10" height="10" rx="2" fill="none" stroke="#555" stroke-width="1"/><rect x="5.5" y="2.5" width="4.5" height="4.5" rx="1" fill="none" stroke="#444" stroke-width="0.9"/><rect x="3.5" y="4.5" width="4.5" height="4.5" rx="1" fill="#c2ddc2" stroke="#444" stroke-width="0.9"/><rect x="14.5" y="0.5" width="10" height="10" rx="2" fill="none" stroke="#555" stroke-width="1"/><path d="M17 3 L22 8 M22 3 L17 8" stroke="#444" stroke-width="2.2"/><path d="M17 3 L22 8 M22 3 L17 8" stroke="#ddd" stroke-width="0.6"/></svg>
<div class="b" style="left:895px;top:150px;width:33px;height:21px"><svg width="32" height="20"><g transform="translate(7.5,3) scale(1.05)"><path d="M0.8 7 Q4 1 9 1.2 Q14 1.5 15.5 5.5 L14 6.5 Q11.5 12.5 7 12 Q3 11.5 0.8 7 Z" fill="#111" stroke="#111" stroke-width="0.8"/><path d="M3.6 6.8 Q6 3.2 9.5 3.5 Q12.5 4 12.6 6.5 Q11 10 7.5 10 Q5 9.8 3.6 6.8 Z" fill="#fff"/><circle cx="8.5" cy="6.6" r="2.6" fill="#111"/><circle cx="7.6" cy="5.7" r="0.7" fill="#fff"/></g></svg></div>
<div class="b" style="left:928px;top:150px;width:33px;height:21px"><svg width="32" height="20"><g transform="translate(7.5,3) scale(1.05)"><path d="M0.8 7 Q4 1 9 1.2 Q14 1.5 15.5 5.5 L14 6.5 Q11.5 12.5 7 12 Q3 11.5 0.8 7 Z" fill="#a8a8a8" stroke="#a8a8a8" stroke-width="0.8"/><path d="M3.6 6.8 Q6 3.2 9.5 3.5 Q12.5 4 12.6 6.5 Q11 10 7.5 10 Q5 9.8 3.6 6.8 Z" fill="#c8d8c8"/><circle cx="8.5" cy="6.6" r="2.6" fill="#a8a8a8"/><circle cx="7.6" cy="5.7" r="0.7" fill="#c8d8c8"/></g></svg></div>
<div class="b" style="left:962px;top:150px;width:33px;height:21px"><svg width="32" height="20"><path d="M16 4 L16 16 M10 10 L22 10" stroke="#e01010" stroke-width="3.2"/></svg></div>
<div class="b" style="left:995px;top:150px;width:33px;height:21px"><svg width="32" height="20"><path d="M10 10 L22 10" stroke="#e01010" stroke-width="3.2"/></svg></div>
<div class="b" style="left:1029px;top:150px;width:33px;height:21px"><svg width="32" height="20"><path d="M9 16 L11 12 L21 3 L23 5 L13 14 Z" fill="#f0b030" stroke="#b06010" stroke-width="0.6"/><path d="M21 3 L23 5 L24 2 Z" fill="#e02020"/></svg></div>
<div style="left:895px;top:225px;width:168px;height:18px;background:#2d5a33"></div>
<div style="left:898px;top:176px;width:16px;height:9px;background:#ffffff;border:1px solid #222"></div>
<div class="t" style="left:920px;top:173px;font-size:13px;letter-spacing:0.2px;color:#223e22">0</div>
<svg style="position:absolute;left:1022px;top:174px;" width="16" height="13" viewBox="0 0 16 13"><path d="M0.8 7 Q4 1 9 1.2 Q14 1.5 15.5 5.5 L14 6.5 Q11.5 12.5 7 12 Q3 11.5 0.8 7 Z" fill="#111" stroke="#111" stroke-width="0.8"/><path d="M3.6 6.8 Q6 3.2 9.5 3.5 Q12.5 4 12.6 6.5 Q11 10 7.5 10 Q5 9.8 3.6 6.8 Z" fill="#fff"/><circle cx="8.5" cy="6.6" r="2.6" fill="#111"/><circle cx="7.6" cy="5.7" r="0.7" fill="#fff"/></svg>
<svg style="position:absolute;left:1045px;top:172px;" width="13" height="16" viewBox="0 0 13 16"><path d="M3.5 7 L3.5 4.5 Q3.5 1 6.5 1 Q9.5 1 9.5 4.5 L9.5 7" fill="none" stroke="#b8b8b8" stroke-width="1.1"/><rect x="2" y="7" width="9.5" height="8.5" fill="#b8b8b8"/><path d="M2 10 L5 7 M2 14 L9 7 M5 15.5 L11.5 9 M9 15.5 L11.5 13 M2 7 L10.5 15.5 M6 7 L11.5 12.5 M2 11 L6.5 15.5" stroke="#fff" stroke-opacity="0.25" stroke-width="0.6"/></svg>
<div style="left:898px;top:194px;width:16px;height:9px;background:#444448;border:1px solid #222"></div>
<div class="t" style="left:920px;top:191px;font-size:13px;letter-spacing:0.2px;color:#223e22">DarkGrey</div>
<svg style="position:absolute;left:1022px;top:192px;" width="16" height="13" viewBox="0 0 16 13"><path d="M0.8 7 Q4 1 9 1.2 Q14 1.5 15.5 5.5 L14 6.5 Q11.5 12.5 7 12 Q3 11.5 0.8 7 Z" fill="#111" stroke="#111" stroke-width="0.8"/><path d="M3.6 6.8 Q6 3.2 9.5 3.5 Q12.5 4 12.6 6.5 Q11 10 7.5 10 Q5 9.8 3.6 6.8 Z" fill="#fff"/><circle cx="8.5" cy="6.6" r="2.6" fill="#111"/><circle cx="7.6" cy="5.7" r="0.7" fill="#fff"/></svg>
<svg style="position:absolute;left:1045px;top:190px;" width="13" height="16" viewBox="0 0 13 16"><path d="M3.5 7 L3.5 4.5 Q3.5 1 6.5 1 Q9.5 1 9.5 4.5 L9.5 7" fill="none" stroke="#b8b8b8" stroke-width="1.1"/><rect x="2" y="7" width="9.5" height="8.5" fill="#b8b8b8"/><path d="M2 10 L5 7 M2 14 L9 7 M5 15.5 L11.5 9 M9 15.5 L11.5 13 M2 7 L10.5 15.5 M6 7 L11.5 12.5 M2 11 L6.5 15.5" stroke="#fff" stroke-opacity="0.25" stroke-width="0.6"/></svg>
<div style="left:898px;top:212px;width:16px;height:9px;background:#00ee00;border:1px solid #222"></div>
<div class="t" style="left:920px;top:209px;font-size:13px;letter-spacing:0.2px;color:#223e22">Pattern</div>
<svg style="position:absolute;left:1022px;top:210px;" width="16" height="13" viewBox="0 0 16 13"><path d="M0.8 7 Q4 1 9 1.2 Q14 1.5 15.5 5.5 L14 6.5 Q11.5 12.5 7 12 Q3 11.5 0.8 7 Z" fill="#111" stroke="#111" stroke-width="0.8"/><path d="M3.6 6.8 Q6 3.2 9.5 3.5 Q12.5 4 12.6 6.5 Q11 10 7.5 10 Q5 9.8 3.6 6.8 Z" fill="#fff"/><circle cx="8.5" cy="6.6" r="2.6" fill="#111"/><circle cx="7.6" cy="5.7" r="0.7" fill="#fff"/></svg>
<svg style="position:absolute;left:1045px;top:208px;" width="13" height="16" viewBox="0 0 13 16"><path d="M3.5 7 L3.5 4.5 Q3.5 1 6.5 1 Q9.5 1 9.5 4.5 L9.5 7" fill="none" stroke="#b8b8b8" stroke-width="1.1"/><rect x="2" y="7" width="9.5" height="8.5" fill="#b8b8b8"/><path d="M2 10 L5 7 M2 14 L9 7 M5 15.5 L11.5 9 M9 15.5 L11.5 13 M2 7 L10.5 15.5 M6 7 L11.5 12.5 M2 11 L6.5 15.5" stroke="#fff" stroke-opacity="0.25" stroke-width="0.6"/></svg>
<div style="left:898px;top:230px;width:16px;height:9px;background:#c8843a;border:1px solid #222"></div>
<div class="t" style="left:920px;top:227px;font-size:13px;letter-spacing:0.2px;color:#f0f8f0">TestArea</div>
<svg style="position:absolute;left:1022px;top:228px;" width="16" height="13" viewBox="0 0 16 13"><path d="M0.8 7 Q4 1 9 1.2 Q14 1.5 15.5 5.5 L14 6.5 Q11.5 12.5 7 12 Q3 11.5 0.8 7 Z" fill="#142a3a" stroke="#142a3a" stroke-width="0.8"/><path d="M3.6 6.8 Q6 3.2 9.5 3.5 Q12.5 4 12.6 6.5 Q11 10 7.5 10 Q5 9.8 3.6 6.8 Z" fill="#2d5a33"/><circle cx="8.5" cy="6.6" r="2.6" fill="#142a3a"/><circle cx="7.6" cy="5.7" r="0.7" fill="#2d5a33"/></svg>
<svg style="position:absolute;left:1045px;top:226px;" width="13" height="16" viewBox="0 0 13 16"><path d="M3.5 7 L3.5 4.5 Q3.5 1 6.5 1 Q9.5 1 9.5 4.5 L9.5 7" fill="none" stroke="#8aa8c8" stroke-width="1.1"/><rect x="2" y="7" width="9.5" height="8.5" fill="#8aa8c8"/><path d="M2 10 L5 7 M2 14 L9 7 M5 15.5 L11.5 9 M9 15.5 L11.5 13 M2 7 L10.5 15.5 M6 7 L11.5 12.5 M2 11 L6.5 15.5" stroke="#fff" stroke-opacity="0.25" stroke-width="0.6"/></svg>
<svg style="position:absolute;left:1000px;top:208px;" width="16" height="16" viewBox="0 0 16 16"><path d="M1 15 L3 11 L13 2 L15 4 L5 13 Z" fill="#f0b030" stroke="#b06010" stroke-width="0.6"/><path d="M13 2 L15 4 L16 1 Z" fill="#e02020"/></svg>
<svg style="position:absolute;left:958px;top:357px;" width="22" height="4" viewBox="0 0 22 4"><rect x="1" y="1" width="1" height="1" fill="#f4faf4"/><rect x="0" y="0" width="1" height="1" fill="#8c9a8c"/><rect x="4" y="1" width="1" height="1" fill="#f4faf4"/><rect x="3" y="0" width="1" height="1" fill="#8c9a8c"/><rect x="7" y="1" width="1" height="1" fill="#f4faf4"/><rect x="6" y="0" width="1" height="1" fill="#8c9a8c"/><rect x="10" y="1" width="1" height="1" fill="#f4faf4"/><rect x="9" y="0" width="1" height="1" fill="#8c9a8c"/><rect x="13" y="1" width="1" height="1" fill="#f4faf4"/><rect x="12" y="0" width="1" height="1" fill="#8c9a8c"/><rect x="16" y="1" width="1" height="1" fill="#f4faf4"/><rect x="15" y="0" width="1" height="1" fill="#8c9a8c"/><rect x="19" y="1" width="1" height="1" fill="#f4faf4"/><rect x="18" y="0" width="1" height="1" fill="#8c9a8c"/></svg>
<div class="t" style="left:872px;top:366px;font-size:13px;font-weight:bold;color:#1f3a1f;letter-spacing:0.45px">Property Editor</div>
<svg style="position:absolute;left:1036px;top:367px;" width="26" height="12" viewBox="0 0 26 12"><rect x="1.5" y="0.5" width="10" height="10" rx="2" fill="none" stroke="#555" stroke-width="1"/><rect x="5.5" y="2.5" width="4.5" height="4.5" rx="1" fill="none" stroke="#444" stroke-width="0.9"/><rect x="3.5" y="4.5" width="4.5" height="4.5" rx="1" fill="#c2ddc2" stroke="#444" stroke-width="0.9"/><rect x="14.5" y="0.5" width="10" height="10" rx="2" fill="none" stroke="#555" stroke-width="1"/><path d="M17 3 L22 8 M22 3 L17 8" stroke="#444" stroke-width="2.2"/><path d="M17 3 L22 8 M22 3 L17 8" stroke="#ddd" stroke-width="0.6"/></svg>
<div class="t" style="left:878px;top:394px;font-size:13px;color:#223e22;letter-spacing:0.25px">Selection:</div>
<div class="b" style="left:943px;top:391px;width:110px;height:19px;border-radius:4px"></div>
<div class="t" style="left:948px;top:394px;font-size:13px;color:#1f3a1f">No Selection</div>
<div class="t" style="left:879px;top:417px;font-size:13px;font-weight:bold;color:#6f9a6f;letter-spacing:0.6px">General Properties</div>
<div style="left:877px;top:436px;width:175px;height:120px;border:1px solid #7aa07a;border-radius:3px"></div>
<div class="t" style="left:870px;top:448px;width:108px;text-align:right;font-size:13px;color:#7a9a7a">Layer:</div>
<div style="left:985px;top:445px;width:70px;height:18px;background:#c8d0c8;border:1px solid #7fa07f;border-radius:3px"></div>
<div class="t" style="left:870px;top:469px;width:108px;text-align:right;font-size:13px;color:#7a9a7a">Color:</div>
<div style="left:985px;top:466px;width:70px;height:18px;background:#c8d0c8;border:1px solid #7fa07f;border-radius:3px"></div>
<div style="left:990px;top:470px;width:16px;height:10px;background:#fff;border:1px solid #666"></div>
<div class="t" style="left:1010px;top:469px;font-size:13px;color:#7a9a7a">By Lay</div>
<div class="t" style="left:870px;top:490px;width:108px;text-align:right;font-size:13px;color:#7a9a7a">Lineweight:</div>
<div style="left:985px;top:487px;width:70px;height:18px;background:#c8d0c8;border:1px solid #7fa07f;border-radius:3px"></div>
<div style="left:990px;top:496px;width:16px;height:1px;background:#7a9a7a"></div>
<div class="t" style="left:1010px;top:490px;font-size:13px;color:#7a9a7a">By Lay</div>
<div class="t" style="left:870px;top:512px;width:108px;text-align:right;font-size:13px;color:#7a9a7a">Linetype:</div>
<div style="left:985px;top:509px;width:70px;height:18px;background:#c8d0c8;border:1px solid #7fa07f;border-radius:3px"></div>
<div class="t" style="left:989px;top:512px;font-size:13px;color:#7a9a7a">By Layer</div>
<div class="t" style="left:870px;top:534px;width:108px;text-align:right;font-size:13px;color:#7a9a7a">Linetype Scale:</div>
<div style="left:985px;top:531px;width:70px;height:18px;background:#c8d0c8;border:1px solid #7fa07f;border-radius:3px"></div>
<div style="left:1048px;top:383px;width:15px;height:167px;background:#a9cca9"></div>
<div style="left:1048px;top:383px;width:14px;height:17px;background:#b8d6b8;border:1px solid #fff;border-right-color:#777;border-bottom-color:#777"></div>
<svg style="position:absolute;left:1048px;top:383px;" width="14" height="17" viewBox="0 0 14 17"><path d="M3 10 L11 10 L7 5.5 Z" fill="#6a8a6a"/></svg>
<div style="left:1048px;top:401px;width:14px;height:97px;background:#5ba05b;border:1px solid #f0f8f0;border-radius:3px"></div>
<div style="left:1048px;top:534px;width:14px;height:16px;background:#b8d6b8;border:1px solid #fff;border-right-color:#777;border-bottom-color:#777"></div>
<svg style="position:absolute;left:1048px;top:534px;" width="14" height="16" viewBox="0 0 14 16"><path d="M3 6 L11 6 L7 10.5 Z" fill="#6a8a6a"/></svg>
<div style="left:868px;top:551px;width:180px;height:15px;background:#a9cca9"></div>
<div style="left:868px;top:551px;width:17px;height:15px;background:#b8d6b8;border:1px solid #fff;border-right-color:#777;border-bottom-color:#777"></div>
<svg style="position:absolute;left:868px;top:551px;" width="17" height="15" viewBox="0 0 17 15"><path d="M10 3.5 L10 11 L5.5 7.2 Z" fill="#6a8a6a"/></svg>
<div style="left:887px;top:551px;width:99px;height:15px;background:#5ba05b;border:1px solid #f0f8f0;border-radius:3px"></div>
<div style="left:1031px;top:551px;width:17px;height:15px;background:#b8d6b8;border:1px solid #fff;border-right-color:#777;border-bottom-color:#777"></div>
<svg style="position:absolute;left:1031px;top:551px;" width="17" height="15" viewBox="0 0 17 15"><path d="M7 3.5 L7 11 L11.5 7.2 Z" fill="#6a8a6a"/></svg>
<svg style="position:absolute;left:958px;top:568px;" width="22" height="4" viewBox="0 0 22 4"><rect x="1" y="1" width="1" height="1" fill="#f4faf4"/><rect x="0" y="0" width="1" height="1" fill="#8c9a8c"/><rect x="4" y="1" width="1" height="1" fill="#f4faf4"/><rect x="3" y="0" width="1" height="1" fill="#8c9a8c"/><rect x="7" y="1" width="1" height="1" fill="#f4faf4"/><rect x="6" y="0" width="1" height="1" fill="#8c9a8c"/><rect x="10" y="1" width="1" height="1" fill="#f4faf4"/><rect x="9" y="0" width="1" height="1" fill="#8c9a8c"/><rect x="13" y="1" width="1" height="1" fill="#f4faf4"/><rect x="12" y="0" width="1" height="1" fill="#8c9a8c"/><rect x="16" y="1" width="1" height="1" fill="#f4faf4"/><rect x="15" y="0" width="1" height="1" fill="#8c9a8c"/><rect x="19" y="1" width="1" height="1" fill="#f4faf4"/><rect x="18" y="0" width="1" height="1" fill="#8c9a8c"/></svg>
<div class="t" style="left:872px;top:574px;font-size:13px;font-weight:bold;color:#1f3a1f;letter-spacing:0.45px">Clipboard</div>
<svg style="position:absolute;left:1036px;top:575px;" width="26" height="12" viewBox="0 0 26 12"><rect x="1.5" y="0.5" width="10" height="10" rx="2" fill="none" stroke="#555" stroke-width="1"/><rect x="5.5" y="2.5" width="4.5" height="4.5" rx="1" fill="none" stroke="#444" stroke-width="0.9"/><rect x="3.5" y="4.5" width="4.5" height="4.5" rx="1" fill="#c2ddc2" stroke="#444" stroke-width="0.9"/><rect x="14.5" y="0.5" width="10" height="10" rx="2" fill="none" stroke="#555" stroke-width="1"/><path d="M17 3 L22 8 M22 3 L17 8" stroke="#444" stroke-width="2.2"/><path d="M17 3 L22 8 M22 3 L17 8" stroke="#ddd" stroke-width="0.6"/></svg>
<div style="left:868px;top:591px;width:195px;height:192px;background:#333333"></div>
<svg style="position:absolute;left:868px;top:591px;" width="195" height="192" viewBox="0 0 195 192"><line x1="30" y1="145.5" x2="70" y2="145.5" stroke="#000" stroke-width="1.2"/><line x1="50.5" y1="125" x2="50.5" y2="166" stroke="#000" stroke-width="1.2"/><circle cx="50.5" cy="145.5" r="5" fill="none" stroke="#777" stroke-width="0.9"/><path d="M45.5 145.5 L55.5 145.5 M50.5 140.5 L50.5 150.5" stroke="#777" stroke-width="0.8"/></svg>
<div style="left:861px;top:131px;width:1px;height:31px;background:#7f9f7f"></div>
<div style="left:1065px;top:131px;width:35px;height:652px;background:linear-gradient(90deg,#c8e2c8,#bcd8bc)"></div>
<svg style="position:absolute;left:1073px;top:137px;" width="22" height="7" viewBox="0 0 22 7"><rect x="1" y="1" width="1" height="1" fill="#f4faf4"/><rect x="0" y="0" width="1" height="1" fill="#8c9a8c"/><rect x="4" y="1" width="1" height="1" fill="#f4faf4"/><rect x="3" y="0" width="1" height="1" fill="#8c9a8c"/><rect x="7" y="1" width="1" height="1" fill="#f4faf4"/><rect x="6" y="0" width="1" height="1" fill="#8c9a8c"/><rect x="10" y="1" width="1" height="1" fill="#f4faf4"/><rect x="9" y="0" width="1" height="1" fill="#8c9a8c"/><rect x="13" y="1" width="1" height="1" fill="#f4faf4"/><rect x="12" y="0" width="1" height="1" fill="#8c9a8c"/><rect x="16" y="1" width="1" height="1" fill="#f4faf4"/><rect x="15" y="0" width="1" height="1" fill="#8c9a8c"/><rect x="19" y="1" width="1" height="1" fill="#f4faf4"/><rect x="18" y="0" width="1" height="1" fill="#8c9a8c"/><rect x="1" y="4" width="1" height="1" fill="#f4faf4"/><rect x="0" y="3" width="1" height="1" fill="#8c9a8c"/><rect x="4" y="4" width="1" height="1" fill="#f4faf4"/><rect x="3" y="3" width="1" height="1" fill="#8c9a8c"/><rect x="7" y="4" width="1" height="1" fill="#f4faf4"/><rect x="6" y="3" width="1" height="1" fill="#8c9a8c"/><rect x="10" y="4" width="1" height="1" fill="#f4faf4"/><rect x="9" y="3" width="1" height="1" fill="#8c9a8c"/><rect x="13" y="4" width="1" height="1" fill="#f4faf4"/><rect x="12" y="3" width="1" height="1" fill="#8c9a8c"/><rect x="16" y="4" width="1" height="1" fill="#f4faf4"/><rect x="15" y="3" width="1" height="1" fill="#8c9a8c"/><rect x="19" y="4" width="1" height="1" fill="#f4faf4"/><rect x="18" y="3" width="1" height="1" fill="#8c9a8c"/></svg>
<div class="b w2" style="left:1067px;top:144px;width:29px;height:28px"><svg width="29" height="28" style="left:-1px;top:-1px"><rect x="5" y="5" width="19" height="19" fill="#fafafa" stroke="#888" stroke-width="0.6"/><rect x="5" y="5" width="19" height="3.5" fill="#111"/><rect x="5.8" y="5.6" width="2.2" height="2.2" fill="#fff"/><rect x="10" y="11" width="9" height="10" fill="#ddd" stroke="#777" stroke-width="0.6"/><rect x="12" y="12" width="8" height="9" fill="#eee" stroke="#888" stroke-width="0.6"/><path d="M14 19 L18 14" stroke="#e08060" stroke-width="0.8"/></svg></div>
<div class="b w2" style="left:1067px;top:174px;width:29px;height:28px"><svg width="29" height="28" style="left:-1px;top:-1px"><rect x="5" y="5" width="19" height="19" fill="#fafafa" stroke="#888" stroke-width="0.6"/><rect x="5" y="5" width="19" height="3.5" fill="#111"/><rect x="5.8" y="5.6" width="2.2" height="2.2" fill="#fff"/><rect x="9" y="11" width="8" height="7" fill="#f4e8d8" stroke="#a08060" stroke-width="0.6"/><circle cx="17" cy="17" r="4" fill="none" stroke="#d0a040" stroke-width="0.8"/></svg></div>
<div class="b" style="left:1067px;top:204px;width:29px;height:28px"><svg width="29" height="28" style="left:-1px;top:-1px"><rect x="5" y="5" width="19" height="19" fill="#fafafa" stroke="#888" stroke-width="0.6"/><rect x="5" y="5" width="19" height="3.5" fill="#111"/><rect x="5.8" y="5.6" width="2.2" height="2.2" fill="#fff"/><rect x="9" y="12" width="12" height="8" fill="#f0f0f8" stroke="#aab" stroke-width="0.5" stroke-dasharray="1 1"/></svg></div>
<div class="b w2" style="left:1067px;top:241px;width:29px;height:28px"><svg width="29" height="28" style="left:-1px;top:-1px"><rect x="5" y="5" width="19" height="19" fill="#fafafa" stroke="#888" stroke-width="0.6"/><rect x="5" y="5" width="19" height="3.5" fill="#111"/><rect x="5.8" y="5.6" width="2.2" height="2.2" fill="#fff"/><rect x="8" y="11" width="3" height="2" fill="#111"/><rect x="8" y="15" width="3" height="2" fill="#111"/><rect x="8" y="19" width="3" height="2" fill="#111"/><rect x="12" y="10.5" width="10" height="3" fill="#ddd" stroke="#888" stroke-width="0.5"/><rect x="12" y="14.5" width="10" height="3" fill="#ddd" stroke="#888" stroke-width="0.5"/><rect x="12" y="18.5" width="10" height="3" fill="#ddd" stroke="#888" stroke-width="0.5"/></svg></div>
<div class="b" style="left:1067px;top:271px;width:29px;height:28px"><svg width="29" height="28" style="left:-1px;top:-1px"><rect x="5" y="5" width="19" height="19" fill="#fafafa" stroke="#888" stroke-width="0.6"/><rect x="5" y="5" width="19" height="3.5" fill="#111"/><rect x="5.8" y="5.6" width="2.2" height="2.2" fill="#fff"/><path d="M9 11 L21 11 L16.5 16 L16.5 22 L13.5 20 L13.5 16 Z" fill="#aaa" stroke="#666" stroke-width="0.6"/></svg></div>
<div class="b" style="left:1067px;top:301px;width:29px;height:28px"><svg width="29" height="28" style="left:-1px;top:-1px"><rect x="5" y="5" width="19" height="19" fill="#fafafa" stroke="#888" stroke-width="0.6"/><rect x="5" y="5" width="19" height="3.5" fill="#111"/><rect x="5.8" y="5.6" width="2.2" height="2.2" fill="#fff"/><path d="M10 11 L10 21 M7 16 L12 16" stroke="#e04040" stroke-width="0.7"/><rect x="13" y="13" width="8" height="7" fill="#555"/><rect x="14" y="14" width="6" height="1" fill="#fff"/><rect x="14" y="17" width="6" height="1" fill="#fff"/></svg></div>
<div class="b w2" style="left:1067px;top:338px;width:29px;height:28px"><svg width="29" height="28" style="left:-1px;top:-1px"><rect x="5" y="5" width="19" height="19" fill="#fafafa" stroke="#888" stroke-width="0.6"/><rect x="5" y="5" width="19" height="3.5" fill="#111"/><rect x="5.8" y="5.6" width="2.2" height="2.2" fill="#fff"/><path d="M8 12 L20 12 M8 14.5 L18 14.5 M8 17 L20 17 M8 19.5 L17 19.5" stroke="#888" stroke-width="0.7"/><rect x="14" y="21" width="9" height="2" fill="#444"/></svg></div>
<div class="b w2" style="left:1067px;top:368px;width:29px;height:28px"><svg width="29" height="28" style="left:-1px;top:-1px"><rect x="5" y="5" width="19" height="19" fill="#fafafa" stroke="#888" stroke-width="0.6"/><rect x="5" y="5" width="19" height="3.5" fill="#111"/><rect x="5.8" y="5.6" width="2.2" height="2.2" fill="#fff"/><rect x="10" y="11" width="10" height="12" fill="#f0d8c0" stroke="#c07030" stroke-width="1"/><rect x="12" y="13" width="6" height="8" fill="#f8f8f8"/><rect x="12.5" y="9.5" width="5" height="2.5" fill="#999"/></svg></div>
<div class="b" style="left:1067px;top:406px;width:29px;height:28px"><svg width="29" height="28" style="left:-1px;top:-1px"><rect x="5" y="5" width="19" height="19" fill="#fafafa" stroke="#888" stroke-width="0.6"/><rect x="5" y="5" width="19" height="3.5" fill="#111"/><rect x="5.8" y="5.6" width="2.2" height="2.2" fill="#fff"/><rect x="9" y="10" width="11" height="3.5" fill="#111"/><rect x="12.5" y="13.5" width="3.5" height="6" fill="#333"/><text x="17" y="22" font-family="Liberation Sans" font-size="6" fill="#111">1</text></svg></div>
<div class="b" style="left:1067px;top:436px;width:29px;height:28px"><svg width="29" height="28" style="left:-1px;top:-1px"><rect x="5" y="5" width="19" height="19" fill="#fafafa" stroke="#888" stroke-width="0.6"/><rect x="5" y="5" width="19" height="3.5" fill="#111"/><rect x="5.8" y="5.6" width="2.2" height="2.2" fill="#fff"/><rect x="9" y="10" width="11" height="3.5" fill="#111"/><rect x="12.5" y="13.5" width="3.5" height="6" fill="#333"/><path d="M15 20 L21 17.5 L23 19 L18 22 Z" fill="none" stroke="#666" stroke-width="0.6"/></svg></div>
<div class="b" style="left:1067px;top:466px;width:29px;height:28px"><svg width="29" height="28" style="left:-1px;top:-1px"><g transform="translate(5,8)"><path d="M1 2.2 Q4.5 -0.8 7.8 1.6 Q9.2 4.6 5 6.3 Q9.5 7.6 8.2 11 Q5 14.2 0.8 11.2 M11.5 0.6 L11.5 12.6 L14.5 12.6 Q19.8 12.6 19.8 6.6 Q19.8 0.6 14.5 0.6 Z" fill="none" stroke="#1e2a1e" stroke-width="1.3"/></g></svg></div>
<div class="b" style="left:1067px;top:496px;width:29px;height:28px"><svg width="29" height="28" style="left:-1px;top:-1px"><rect x="5" y="5" width="19" height="19" fill="#fafafa" stroke="#888" stroke-width="0.6"/><rect x="5" y="5" width="19" height="3.5" fill="#111"/><rect x="5.8" y="5.6" width="2.2" height="2.2" fill="#fff"/><path d="M10 14 L14 17 L10 20 Z M15 14 L19 17 L15 20 Z" fill="#1a2ae0"/></svg></div>
<svg style="position:absolute;left:1073px;top:237px;" width="22" height="4" viewBox="0 0 22 4"><rect x="1" y="1" width="1" height="1" fill="#f4faf4"/><rect x="0" y="0" width="1" height="1" fill="#8c9a8c"/><rect x="4" y="1" width="1" height="1" fill="#f4faf4"/><rect x="3" y="0" width="1" height="1" fill="#8c9a8c"/><rect x="7" y="1" width="1" height="1" fill="#f4faf4"/><rect x="6" y="0" width="1" height="1" fill="#8c9a8c"/><rect x="10" y="1" width="1" height="1" fill="#f4faf4"/><rect x="9" y="0" width="1" height="1" fill="#8c9a8c"/><rect x="13" y="1" width="1" height="1" fill="#f4faf4"/><rect x="12" y="0" width="1" height="1" fill="#8c9a8c"/><rect x="16" y="1" width="1" height="1" fill="#f4faf4"/><rect x="15" y="0" width="1" height="1" fill="#8c9a8c"/><rect x="19" y="1" width="1" height="1" fill="#f4faf4"/><rect x="18" y="0" width="1" height="1" fill="#8c9a8c"/></svg>
<svg style="position:absolute;left:1073px;top:334px;" width="22" height="4" viewBox="0 0 22 4"><rect x="1" y="1" width="1" height="1" fill="#f4faf4"/><rect x="0" y="0" width="1" height="1" fill="#8c9a8c"/><rect x="4" y="1" width="1" height="1" fill="#f4faf4"/><rect x="3" y="0" width="1" height="1" fill="#8c9a8c"/><rect x="7" y="1" width="1" height="1" fill="#f4faf4"/><rect x="6" y="0" width="1" height="1" fill="#8c9a8c"/><rect x="10" y="1" width="1" height="1" fill="#f4faf4"/><rect x="9" y="0" width="1" height="1" fill="#8c9a8c"/><rect x="13" y="1" width="1" height="1" fill="#f4faf4"/><rect x="12" y="0" width="1" height="1" fill="#8c9a8c"/><rect x="16" y="1" width="1" height="1" fill="#f4faf4"/><rect x="15" y="0" width="1" height="1" fill="#8c9a8c"/><rect x="19" y="1" width="1" height="1" fill="#f4faf4"/><rect x="18" y="0" width="1" height="1" fill="#8c9a8c"/></svg>
<svg style="position:absolute;left:1073px;top:401px;" width="22" height="4" viewBox="0 0 22 4"><rect x="1" y="1" width="1" height="1" fill="#f4faf4"/><rect x="0" y="0" width="1" height="1" fill="#8c9a8c"/><rect x="4" y="1" width="1" height="1" fill="#f4faf4"/><rect x="3" y="0" width="1" height="1" fill="#8c9a8c"/><rect x="7" y="1" width="1" height="1" fill="#f4faf4"/><rect x="6" y="0" width="1" height="1" fill="#8c9a8c"/><rect x="10" y="1" width="1" height="1" fill="#f4faf4"/><rect x="9" y="0" width="1" height="1" fill="#8c9a8c"/><rect x="13" y="1" width="1" height="1" fill="#f4faf4"/><rect x="12" y="0" width="1" height="1" fill="#8c9a8c"/><rect x="16" y="1" width="1" height="1" fill="#f4faf4"/><rect x="15" y="0" width="1" height="1" fill="#8c9a8c"/><rect x="19" y="1" width="1" height="1" fill="#f4faf4"/><rect x="18" y="0" width="1" height="1" fill="#8c9a8c"/></svg>
<div style="left:1100px;top:0px;width:1px;height:783px;background:#8a9090"></div>
<div style="left:1101px;top:0px;width:374px;height:783px;background:linear-gradient(#161b22,#12161d 40%,#0d1116)"></div>
<div style="left:1103px;top:259px;width:371px;height:326px;background:#d4d0c8;border-radius:8px 8px 0 0;overflow:hidden;border-bottom:1px solid #404040;border-right:1px solid #f0f0f0"></div>
<div style="left:1103px;top:259px;width:371px;height:31px;background:#e9e9e9;border-radius:8px 8px 0 0"></div>
<div class="t" style="left:1170px;top:268px;font-size:13px;font-weight:bold;color:#a8a8a8">Basic Hatch Tool V3.5.1 © J.M.Hyslop</div>
<div style="left:1421px;top:276px;width:9px;height:1px;background:#b0b0b0"></div>
<svg style="position:absolute;left:1448px;top:264px;" width="20" height="20" viewBox="0 0 20 20"><circle cx="10" cy="10" r="9" fill="#b8b8b8"/><path d="M6.3 6.3 L13.7 13.7 M13.7 6.3 L6.3 13.7" stroke="#fff" stroke-width="1.6"/></svg>
<div style="left:1104px;top:289px;width:369px;height:2px;background:#d4d0c8"></div>
<div style="left:1107px;top:291px;width:68px;height:18px;background:#fff;border:1px solid #fff;border-right:2px solid #404040;box-shadow:inset 0 0 0 2px #d4d0c8;border-bottom:none"></div>
<div class="t" style="left:1113px;top:297px;font-size:12px;color:#000;transform:scaleX(0.88);transform-origin:0 0">Diamond-01</div>
<div style="left:1176px;top:291px;width:54px;height:18px;background:#fff;border:1px solid #fff;border-right:2px solid #404040;box-shadow:inset 0 0 0 2px #d4d0c8;border-bottom:none"></div>
<div class="t" style="left:1186px;top:297px;font-size:12px;color:#000;transform:scaleX(0.88);transform-origin:0 0">DotCirc</div>
<div style="left:1230px;top:291px;width:54px;height:18px;background:#fff;border:1px solid #fff;border-right:2px solid #404040;box-shadow:inset 0 0 0 2px #d4d0c8;border-bottom:none"></div>
<div class="t" style="left:1236px;top:297px;font-size:12px;color:#000;transform:scaleX(0.88);transform-origin:0 0">Grille-01</div>
<div style="left:1284px;top:291px;width:52px;height:18px;background:#fff;border:1px solid #fff;border-right:2px solid #404040;box-shadow:inset 0 0 0 2px #d4d0c8;border-bottom:none"></div>
<div class="t" style="left:1290px;top:297px;font-size:12px;color:#000;transform:scaleX(0.88);transform-origin:0 0">Grille-02</div>
<div style="left:1393px;top:291px;width:50px;height:18px;background:#fff;border:1px solid #fff;box-shadow:inset 0 0 0 2px #d4d0c8;overflow:hidden"></div>
<div class="t" style="left:1396px;top:297px;font-size:12px;color:#000;transform:scaleX(0.88);transform-origin:0 0;width:46px;overflow:hidden">Herringbone</div>
<div style="left:1104px;top:309px;width:369px;height:1px;background:#fff"></div>
<div style="left:1336px;top:289px;width:57px;height:21px;background:#d4d0c8;border:1px solid #fff;border-right:2px solid #404040;border-bottom:none"></div>
<div class="t" style="left:1344px;top:294px;font-size:12px;color:#000;transform:scaleX(0.88);transform-origin:0 0">Grille-03</div>
<div style="left:1441px;top:292px;width:15px;height:15px;background:#d4d0c8;border:1px solid #fff;border-right-color:#404040;border-bottom-color:#404040"></div>
<svg style="position:absolute;left:1441px;top:292px;" width="15" height="15" viewBox="0 0 15 15"><path d="M9 3 L9 11 L5 7 Z" fill="#000"/></svg>
<div style="left:1456px;top:292px;width:15px;height:15px;background:#d4d0c8;border:1px solid #fff;border-right-color:#404040;border-bottom-color:#404040"></div>
<svg style="position:absolute;left:1456px;top:292px;" width="15" height="15" viewBox="0 0 15 15"><path d="M6 3 L6 11 L10 7 Z" fill="#000"/></svg>
<div style="left:1471px;top:309px;width:2px;height:275px;background:#404040"></div>
<div class="t" style="left:1345px;top:315px;font-size:12px;color:#2a5ad0;transform:scaleX(0.86);transform-origin:0 0">Calculator</div>
<div class="t" style="left:1404px;top:315px;font-size:12px;color:#2a5ad0;transform:scaleX(0.86);transform-origin:0 0">About</div>
<div class="t" style="left:1444px;top:315px;font-size:12px;color:#2a5ad0;transform:scaleX(0.86);transform-origin:0 0">Help</div>
<div style="left:1110px;top:329px;width:358px;height:220px;border:1px solid #808080;border-right-color:#fff;border-bottom-color:#fff;box-shadow:inset 1px 1px 0 #fff, inset -1px -1px 0 #808080"></div>
<div style="left:1114px;top:334px;width:75px;height:25px;background:#d4d0c8;border:2px solid #000;box-shadow:inset 1px 1px 0 #fff, inset -1px -1px 0 #404040"></div>
<div style="left:1118px;top:338px;width:67px;height:17px;border:1px dotted #333"></div>
<div class="t" style="left:1120px;top:340px;font-size:12px;color:#000;transform:scaleX(0.88);transform-origin:0 0">Create Hatch</div>
<div class="t" style="left:1209px;top:340px;font-size:12px;color:#000;transform:scaleX(0.88);transform-origin:0 0">Hatch Name:</div>
<div style="left:1289px;top:334px;width:162px;height:21px;background:#fff;border:2px solid #404040;border-right-color:#e8e8e8;border-bottom-color:#e8e8e8;box-shadow:inset 1px 1px 0 #808080"></div>
<div class="t" style="left:1292px;top:339px;font-size:12px;color:#000;transform:scaleX(0.88);transform-origin:0 0">GRILLE-03</div>
<div style="left:1290px;top:360px;width:13px;height:13px;background:#fff;border:2px solid #404040;border-right-color:#e8e8e8;border-bottom-color:#e8e8e8"></div>
<div class="t" style="left:1315px;top:362px;font-size:12px;color:#000;transform:scaleX(0.88);transform-origin:0 0">Tick For Advanced Options:</div>
<div class="t" style="left:1115px;top:385px;font-size:12px;color:#000;transform:scaleX(0.88);transform-origin:0 0">Width:</div>
<div class="t" style="left:1115px;top:412px;font-size:12px;color:#000;transform:scaleX(0.88);transform-origin:0 0">Number of Gaps:</div>
<div class="t" style="left:1115px;top:439px;font-size:12px;color:#000;transform:scaleX(0.88);transform-origin:0 0">Height:</div>
<div class="t" style="left:1115px;top:466px;font-size:12px;color:#000;transform:scaleX(0.88);transform-origin:0 0">Number of Gaps:</div>
<div style="left:1209px;top:379px;width:60px;height:21px;background:#fff;border:2px solid #404040;border-right-color:#e8e8e8;border-bottom-color:#e8e8e8;box-shadow:inset 1px 1px 0 #808080"></div>
<div class="t" style="left:1212px;top:384px;font-size:12px;color:#000;transform:scaleX(0.88);transform-origin:0 0">15</div>
<div style="left:1209px;top:406px;width:60px;height:21px;background:#fff;border:2px solid #404040;border-right-color:#e8e8e8;border-bottom-color:#e8e8e8;box-shadow:inset 1px 1px 0 #808080"></div>
<div class="t" style="left:1212px;top:411px;font-size:12px;color:#000;transform:scaleX(0.88);transform-origin:0 0">2</div>
<div style="left:1209px;top:433px;width:60px;height:21px;background:#fff;border:2px solid #404040;border-right-color:#e8e8e8;border-bottom-color:#e8e8e8;box-shadow:inset 1px 1px 0 #808080"></div>
<div class="t" style="left:1212px;top:438px;font-size:12px;color:#000;transform:scaleX(0.88);transform-origin:0 0">5</div>
<div style="left:1209px;top:460px;width:60px;height:21px;background:#fff;border:2px solid #404040;border-right-color:#e8e8e8;border-bottom-color:#e8e8e8;box-shadow:inset 1px 1px 0 #808080"></div>
<div class="t" style="left:1212px;top:465px;font-size:12px;color:#000;transform:scaleX(0.88);transform-origin:0 0">2</div>
<div style="left:1114px;top:517px;width:35px;height:25px;background:#d4d0c8;border:1px solid #fff;border-right-color:#404040;border-bottom-color:#404040;box-shadow:inset -1px -1px 0 #808080"></div>
<div class="t" style="left:1114px;top:523px;width:35px;text-align:center;font-size:12px;color:#000">/</div>
<div style="left:1154px;top:517px;width:35px;height:25px;background:#d4d0c8;border:1px solid #fff;border-right-color:#404040;border-bottom-color:#404040;box-shadow:inset -1px -1px 0 #808080"></div>
<div class="t" style="left:1154px;top:523px;width:35px;text-align:center;font-size:12px;color:#000">X</div>
<div style="left:1194px;top:517px;width:35px;height:25px;background:#d4d0c8;border:1px solid #fff;border-right-color:#404040;border-bottom-color:#404040;box-shadow:inset -1px -1px 0 #808080"></div>
<div class="t" style="left:1194px;top:523px;width:35px;text-align:center;font-size:12px;color:#000">INCH</div>
<div style="left:1234px;top:517px;width:35px;height:25px;background:#d4d0c8;border:1px solid #fff;border-right-color:#404040;border-bottom-color:#404040;box-shadow:inset -1px -1px 0 #808080"></div>
<div class="t" style="left:1234px;top:523px;width:35px;text-align:center;font-size:12px;color:#000">MM</div>
<svg style="position:absolute;left:1289px;top:379px;" width="162" height="162" viewBox="0 0 162 162"><rect x="1" y="1" width="160" height="160" fill="#fff" stroke="#000" stroke-width="2"/><path d="M26.5 21 L40.5 21 M33.5 14 L33.5 28" stroke="#222" stroke-width="0.8"/><path d="M73.5 21 L87.5 21 M80.5 14 L80.5 28" stroke="#222" stroke-width="0.8"/><path d="M120.5 21 L134.5 21 M127.5 14 L127.5 28" stroke="#222" stroke-width="0.8"/><path d="M10 21 L15 21 M51 21 L63 21 M98 21 L110 21 M145 21 L150 21" stroke="#222" stroke-width="0.8"/><path d="M26.5 80 L40.5 80 M33.5 73 L33.5 87" stroke="#222" stroke-width="0.8"/><path d="M73.5 80 L87.5 80 M80.5 73 L80.5 87" stroke="#222" stroke-width="0.8"/><path d="M120.5 80 L134.5 80 M127.5 73 L127.5 87" stroke="#222" stroke-width="0.8"/><path d="M10 80 L15 80 M51 80 L63 80 M98 80 L110 80 M145 80 L150 80" stroke="#222" stroke-width="0.8"/><path d="M26.5 139 L40.5 139 M33.5 132 L33.5 146" stroke="#222" stroke-width="0.8"/><path d="M73.5 139 L87.5 139 M80.5 132 L80.5 146" stroke="#222" stroke-width="0.8"/><path d="M120.5 139 L134.5 139 M127.5 132 L127.5 146" stroke="#222" stroke-width="0.8"/><path d="M10 139 L15 139 M51 139 L63 139 M98 139 L110 139 M145 139 L150 139" stroke="#222" stroke-width="0.8"/><path d="M33.5 43.5 L33.5 57.5" stroke="#222" stroke-width="0.8"/><path d="M80.5 43.5 L80.5 57.5" stroke="#222" stroke-width="0.8"/><path d="M127.5 43.5 L127.5 57.5" stroke="#222" stroke-width="0.8"/><path d="M33.5 102.5 L33.5 116.5" stroke="#222" stroke-width="0.8"/><path d="M80.5 102.5 L80.5 116.5" stroke="#222" stroke-width="0.8"/><path d="M127.5 102.5 L127.5 116.5" stroke="#222" stroke-width="0.8"/><text x="39" y="33" font-family="Liberation Sans" font-size="11" fill="#222">WIDTH</text><text x="89" y="55" font-family="Liberation Sans" font-size="11" fill="#222">GAPS</text><text x="89" y="114" font-family="Liberation Sans" font-size="11" fill="#222">GAPS</text><text x="0" y="0" font-family="Liberation Sans" font-size="11" fill="#222" transform="translate(45,130) rotate(-90)">HEIGHT</text><path d="M92 21 L92 37 M115.5 21 L115.5 37" stroke="#222" stroke-width="0.8"/><path d="M92 21 L90 27 L94 27 Z M115.5 21 L113.5 27 L117.5 27 Z" fill="#222"/><path d="M80.5 95 L96 95 M80.5 124 L96 124" stroke="#222" stroke-width="0.8"/><path d="M80.5 95 L86 93 L86 97 Z M80.5 124 L86 122 L86 126 Z" fill="#222"/></svg>
<div style="left:1110px;top:549px;width:358px;height:1px;background:#fff"></div>
<div class="t" style="left:1111px;top:559px;font-size:12px;color:#000;transform:scaleX(0.88);transform-origin:0 0">SCALE =</div>
<div style="left:1159px;top:554px;width:49px;height:21px;background:#fff;border:2px solid #404040;border-right-color:#e8e8e8;border-bottom-color:#e8e8e8"></div>
<div class="t" style="left:1162px;top:559px;font-size:12px;color:#000;transform:scaleX(0.88);transform-origin:0 0">10</div>
<div style="left:1190px;top:556px;width:16px;height:17px;background:#d4d0c8;border:1px solid #fff;border-right-color:#404040;border-bottom-color:#404040"></div>
<svg style="position:absolute;left:1190px;top:556px;" width="16" height="17" viewBox="0 0 16 17"><path d="M4 7 L12 7 L8 11 Z" fill="#000"/></svg>
<div style="left:1232px;top:554px;width:235px;height:21px;background:#fff;border:2px solid #404040;border-right-color:#e8e8e8;border-bottom-color:#e8e8e8;box-shadow:inset 1px 1px 0 #808080"></div>
<div class="t" style="left:1235px;top:559px;font-size:12px;color:#000;transform:scaleX(0.88);transform-origin:0 0">Add User Name or Comments Here</div></body></html>
